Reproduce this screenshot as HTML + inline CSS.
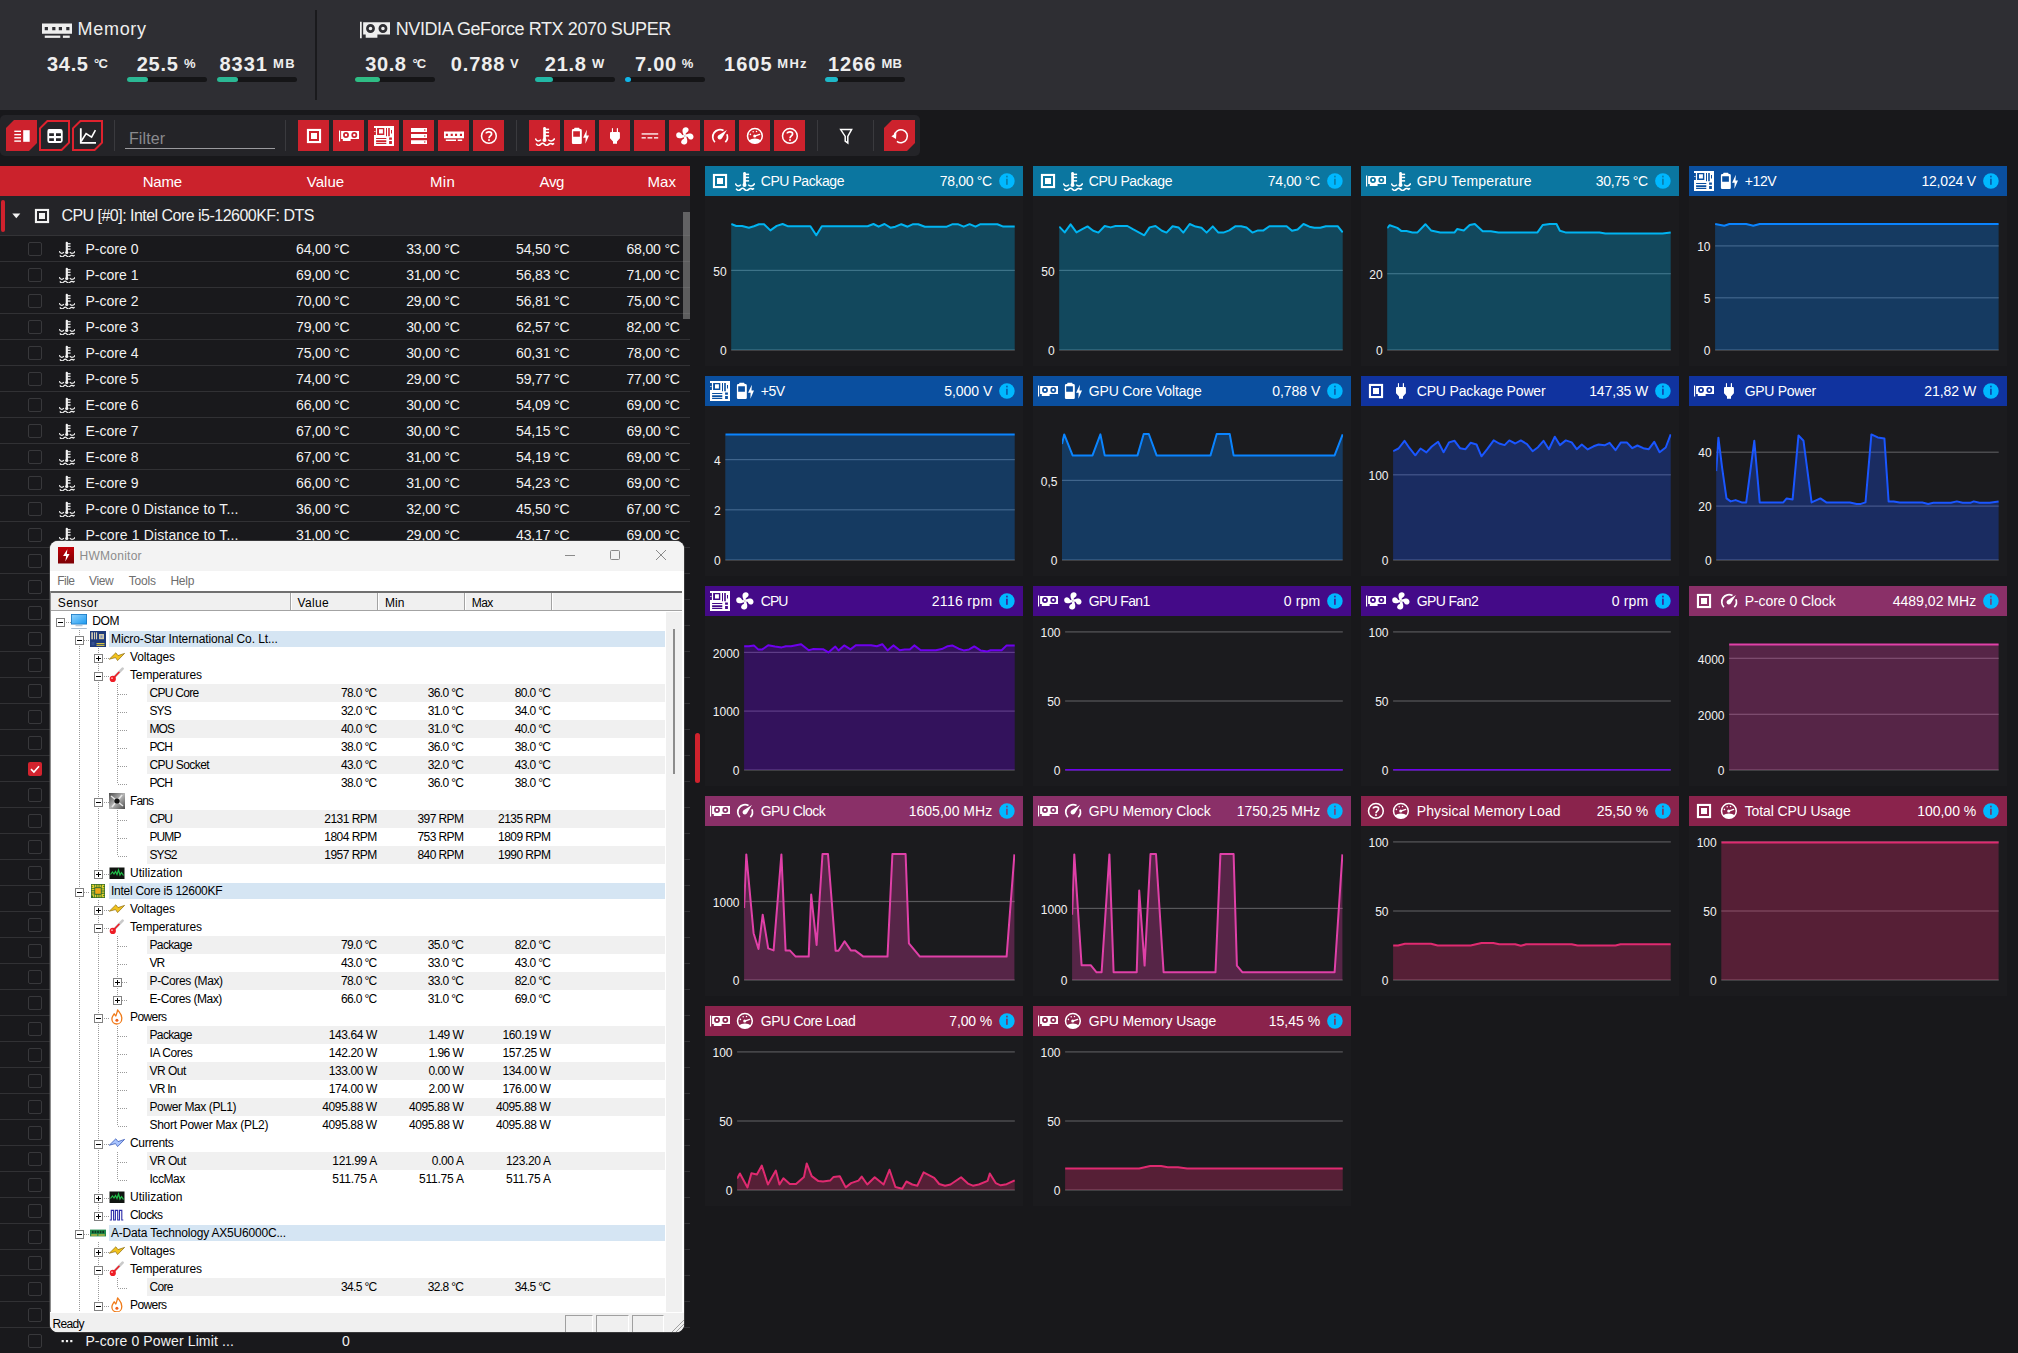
<!DOCTYPE html>
<html><head><meta charset="utf-8"><title>Sensors</title><style>
html,body{margin:0;padding:0}
body{width:2018px;height:1353px;overflow:hidden;position:relative;background:#18181b;font-family:"Liberation Sans", sans-serif;}
.t{position:absolute;white-space:pre;}
.b{position:absolute;display:block;}
</style></head><body>
<svg width="0" height="0" style="position:absolute"><defs><symbol id="i-gpu" viewBox="0 0 20 20"><rect x="-0.1" y="4.5" width="1.25" height="11" fill="currentColor"/><path fill="currentColor" fill-rule="evenodd" d="M2.1,4.9H20V13H11.6V15.1H3.8V13H2.1zM4.05,9.00a2.95,2.95 0 1,0 5.90,0a2.95,2.95 0 1,0 -5.90,0zM5.80,9.00a1.20,1.20 0 1,0 2.40,0a1.20,1.20 0 1,0 -2.40,0zM12.35,9.00a2.95,2.95 0 1,0 5.90,0a2.95,2.95 0 1,0 -5.90,0zM14.10,9.00a1.20,1.20 0 1,0 2.40,0a1.20,1.20 0 1,0 -2.40,0z"/></symbol><symbol id="i-cpu" viewBox="0 0 20 20"><rect x="3.95" y="3.95" width="12.1" height="12.1" fill="none" stroke="currentColor" stroke-width="2.1"/><rect x="7" y="7" width="6" height="6" fill="currentColor"/></symbol><symbol id="i-mobo" viewBox="0 0 20 20"><path fill="currentColor" fill-rule="evenodd" d="M0,0H20V20H0zM3.1,2.1H10.3V8.9H3.1z M5,3.3V7.5H8.9V3.3zM0,2.1H1.9V8.9H0zM12,2.1H13V10.3H12zM14.2,2.1H15.8V10.3H14.2zM17,4H18V7.5H17zM2.1,12H12.3V12.9H2.1z M2.1,14.2H12.3V16.2H2.1z M2.1,17H12.3V17.9H2.1zM15.1,11.6H17.9V13.7H15.1z M15.1,15.1H17.9V17.9H15.1z"/><rect x="0.4" y="5" width="1" height="1" fill="currentColor"/></symbol><symbol id="i-help" viewBox="0 0 20 20"><circle cx="9.9" cy="9.9" r="7.4" fill="none" stroke="currentColor" stroke-width="1.5"/><path d="M7.3,7.6C7.3,5.4 12.6,5.2 12.6,7.9C12.6,9.7 10,10 10,12.2" fill="none" stroke="currentColor" stroke-width="1.7"/><rect x="9.15" y="13.2" width="1.7" height="1.7" fill="currentColor"/></symbol><symbol id="i-thermo" viewBox="0 0 20 20"><g fill="currentColor"><rect x="8.2" y="1" width="2.7" height="12.5" rx="1.2"/><circle cx="9.5" cy="13.9" r="2"/><rect x="10" y="2.6" width="4.1" height="1.5"/><rect x="10" y="5.7" width="4.1" height="1.5"/><rect x="10" y="9.1" width="4.1" height="1.5"/></g><g fill="none" stroke="currentColor" stroke-width="1.5"><path d="M0.4,12.4C1.4,15.6 4.4,15.6 5.9,13.6"/><path d="M13.2,13.6C14.7,15.6 18.2,15.6 19.7,12.4"/><path d="M1.1,17.6C2.6,19.9 4.1,19.9 5.6,18.4C7.1,16.9 8.1,16.9 9.6,18.4C11.1,19.9 12.1,19.9 13.6,18.4C15.1,16.9 16.6,17.4 17.6,18.4L19.1,17.4"/></g></symbol><symbol id="i-volt" viewBox="0 0 20 20"><path fill="currentColor" fill-rule="evenodd" d="M4.2,3.1V2.4Q4.2,1.8 4.8,1.8H8.9Q9.5,1.8 9.5,2.4V3.1H10.4Q11.8,3.1 11.8,4.5V16.8Q11.8,18 10.6,18H3.1Q1.9,18 1.9,16.8V4.5Q1.9,3.1 3.3,3.1zM3.2,5.2H9.9V10.8H3.2z"/><path fill="currentColor" d="M16.8,3.7L13.1,11.7H15.6L15.4,17.8L19,9.5H16.5z"/></symbol><symbol id="i-plug" viewBox="0 0 20 20"><path fill="currentColor" d="M6.9,2.6Q6.9,2 7.45,2Q8,2 8,2.6V6.1H11.8V2.6Q11.8,2 12.4,2Q13,2 13,2.6V6.1H13.9Q14.9,6.1 14.9,7.1V12.3L12,15.5V17.7H8V15.5L5,12.3V7.1Q5,6.1 6,6.1H6.9z"/></symbol><symbol id="i-fan" viewBox="0 0 20 20"><g transform="translate(9.9,9.9)" fill="currentColor"><path transform="rotate(0)" d="M-1.3,-0.9C-1.9,-2.6 -2.9,-4.6 -2.2,-6.6C-1.4,-8.8 1.8,-9.4 3.2,-7.6C4.5,-5.9 3.2,-3.6 1.3,-3C0.6,-2.6 0.6,-1.6 0.9,-0.8z"/><path transform="rotate(90)" d="M-1.3,-0.9C-1.9,-2.6 -2.9,-4.6 -2.2,-6.6C-1.4,-8.8 1.8,-9.4 3.2,-7.6C4.5,-5.9 3.2,-3.6 1.3,-3C0.6,-2.6 0.6,-1.6 0.9,-0.8z"/><path transform="rotate(180)" d="M-1.3,-0.9C-1.9,-2.6 -2.9,-4.6 -2.2,-6.6C-1.4,-8.8 1.8,-9.4 3.2,-7.6C4.5,-5.9 3.2,-3.6 1.3,-3C0.6,-2.6 0.6,-1.6 0.9,-0.8z"/><path transform="rotate(270)" d="M-1.3,-0.9C-1.9,-2.6 -2.9,-4.6 -2.2,-6.6C-1.4,-8.8 1.8,-9.4 3.2,-7.6C4.5,-5.9 3.2,-3.6 1.3,-3C0.6,-2.6 0.6,-1.6 0.9,-0.8z"/><circle r="1.7"/></g><circle cx="9.9" cy="9.9" r="0.75" fill="#000" fill-opacity="0.35"/></symbol><symbol id="i-clock" viewBox="0 0 20 20"><g fill="none" stroke="currentColor" stroke-width="1.7"><path d="M4.90,16.20A7.35,7.35 0 0,1 13.55,4.51"/><path d="M16.91,8.25A7.35,7.35 0 0,1 15.30,16.20"/></g><path fill="currentColor" d="M16.9,4.1L8.6,9.2C6.9,10.4 7.4,13.2 9.7,13.4C11.2,13.5 11.9,12.6 12.4,11.6z"/></symbol><symbol id="i-usage" viewBox="0 0 20 20"><circle cx="9.9" cy="9.9" r="7.4" fill="none" stroke="currentColor" stroke-width="1.5"/><g fill="currentColor"><circle cx="5.4" cy="8.4" r="0.8"/><circle cx="8.2" cy="5.7" r="0.75"/><circle cx="11.5" cy="5.6" r="0.75"/><circle cx="9.7" cy="10.1" r="1.5"/><path d="M3.9,14.6C6.9,11.9 12.9,11.9 15.9,14.6C13.4,18.3 6.4,18.3 3.9,14.6z"/></g><path d="M9.7,10.1L14.7,8.3" stroke="currentColor" stroke-width="1.3" stroke-linecap="round"/></symbol><symbol id="i-current" viewBox="0 0 20 20"><g fill="currentColor"><rect x="1.6" y="7.3" width="16.6" height="1.3"/><rect x="1.6" y="11.2" width="4.2" height="1.3"/><rect x="7.5" y="11.2" width="4.8" height="1.3"/><rect x="14" y="11.2" width="4.2" height="1.3"/></g></symbol><symbol id="i-drive" viewBox="0 0 20 20"><path fill="currentColor" fill-rule="evenodd" d="M2,2H18V6H2z M2,8.1H18V11.9H2z M2,14.2H18V18H2zM15.05,4.00a0.75,0.75 0 1,0 1.50,0a0.75,0.75 0 1,0 -1.50,0zM15.05,10.00a0.75,0.75 0 1,0 1.50,0a0.75,0.75 0 1,0 -1.50,0zM15.05,16.10a0.75,0.75 0 1,0 1.50,0a0.75,0.75 0 1,0 -1.50,0z"/></symbol><symbol id="i-ram" viewBox="0 0 20 20"><path fill="currentColor" fill-rule="evenodd" d="M0,5.5H20V12.3H0zM1.8,7.8H3.9V10H1.8z M6.7,7.8H8.8V10H6.7z M11,7.8H13.1V10H11z M15.9,7.8H18V10H15.9z"/><rect x="1.8" y="13.5" width="10.2" height="1.5" fill="currentColor"/><rect x="13.7" y="13.5" width="4.5" height="1.5" fill="currentColor"/></symbol><symbol id="i-filter" viewBox="0 0 20 20"><path d="M4.7,3.6H15.6L11.8,10.4V16.9L9.2,15V10.4z" fill="none" stroke="currentColor" stroke-width="1.5" stroke-linejoin="miter"/></symbol><symbol id="i-reset" viewBox="0 0 20 20"><path d="M4.44,9.52A6.5,6.5 0 1,1 6.90,15.32" fill="none" stroke="currentColor" stroke-width="1.5"/><path fill="currentColor" d="M1.4,10.2L6.4,6.9L6.0,12.9z"/></symbol><symbol id="i-dots" viewBox="0 0 20 20"><g fill="currentColor"><rect x="3.6" y="9" width="2.2" height="2.2"/><rect x="7.9" y="9" width="2.2" height="2.2"/><rect x="12.2" y="9" width="2.2" height="2.2"/></g></symbol><symbol id="i-info" viewBox="0 0 16 16"><circle cx="8" cy="8" r="8" fill="#00b2ff"/><rect x="7.15" y="6.7" width="1.7" height="5.6" fill="#0a6390"/><rect x="7.15" y="3.8" width="1.7" height="1.8" fill="#0a6390"/></symbol><symbol id="i-v1" viewBox="0 0 31 31"><g fill="currentColor"><rect x="8.3" y="10.6" width="6.7" height="1.4"/><rect x="8.3" y="13.9" width="6.7" height="1.4"/><rect x="8.3" y="17.1" width="6.7" height="1.4"/><rect x="8.3" y="20.4" width="6.7" height="1.4"/><rect x="17.2" y="10.2" width="6.5" height="11.6"/></g></symbol><symbol id="i-v2" viewBox="0 0 31 31"><path fill="currentColor" fill-rule="evenodd" d="M10,9H21.3Q23.7,9 23.7,11.4V20.5Q23.7,22.9 21.3,22.9H10Q8.4,22.9 8.4,20.5V11.4Q8.4,9 10,9zM10.2,13.2H14.9V16H10.2z M17,13.2H21.9V16H17z M10.2,18.2H14.9V21H10.2z M17,18.2H21.9V21H17z"/></symbol><symbol id="i-v3" viewBox="0 0 31 31"><g fill="none" stroke="currentColor" stroke-width="1.8"><path d="M8.8,8.2V22.8H24"/><path d="M9.2,21.3L14.1,13.6L19.6,17.2L23.4,10.2" stroke-width="1.6"/></g></symbol></defs></svg>
<div class="b" style="left:0px;top:0px;width:2018px;height:110px;background:#2e2e33;"></div>
<div class="b" style="left:315px;top:10px;width:2px;height:90px;background:#1a1a1d;"></div>
<svg class="b" style="left:41.5px;top:15px;color:#eeeeee;" width="30.5" height="30.5"><use href="#i-ram"/></svg>
<span id="t1" class="t" style="top:18.0px;font-size:18px;line-height:23px;color:#eeeeee;letter-spacing:0.68px;left:77.6px;">Memory</span>
<span id="t2" class="t" style="top:18.0px;font-size:18px;line-height:23px;color:#eeeeee;letter-spacing:-0.40px;left:395.7px;">NVIDIA GeForce RTX 2070 SUPER</span>
<svg class="b" style="left:360px;top:15.3px;color:#eeeeee;" width="30" height="30"><use href="#i-gpu"/></svg>
<span id="t3" class="t" style="top:50.5px;font-size:20px;line-height:26px;color:#eeeeee;font-weight:700;letter-spacing:0.69px;left:47.0px;">34.5</span>
<span id="t4" class="t" style="top:54.8px;font-size:13px;line-height:17px;color:#eeeeee;font-weight:700;letter-spacing:-0.59px;left:94.0px;">°C</span>
<span id="t5" class="t" style="top:50.5px;font-size:20px;line-height:26px;color:#eeeeee;font-weight:700;letter-spacing:0.79px;left:136.7px;">25.5</span>
<span id="t6" class="t" style="top:54.8px;font-size:13px;line-height:17px;color:#eeeeee;font-weight:700;left:184.0px;">%</span>
<div class="b" style="left:127px;top:77px;width:80px;height:5px;background:#151517;border-radius:3px;"></div>
<div class="b" style="left:127px;top:77px;width:21px;height:5px;background:#2bb894;border-radius:3px;"></div>
<span id="t7" class="t" style="top:50.5px;font-size:20px;line-height:26px;color:#eeeeee;font-weight:700;letter-spacing:1.00px;left:219.5px;">8331</span>
<span id="t8" class="t" style="top:54.8px;font-size:13px;line-height:17px;color:#eeeeee;font-weight:700;letter-spacing:1.38px;left:273.0px;">MB</span>
<div class="b" style="left:217px;top:77px;width:80px;height:5px;background:#151517;border-radius:3px;"></div>
<div class="b" style="left:217px;top:77px;width:21px;height:5px;background:#2bb894;border-radius:3px;"></div>
<span id="t9" class="t" style="top:50.5px;font-size:20px;line-height:26px;color:#eeeeee;font-weight:700;letter-spacing:0.59px;left:365.3px;">30.8</span>
<span id="t10" class="t" style="top:54.8px;font-size:13px;line-height:17px;color:#eeeeee;font-weight:700;letter-spacing:-0.90px;left:412.4px;">°C</span>
<div class="b" style="left:355px;top:77px;width:80px;height:5px;background:#151517;border-radius:3px;"></div>
<div class="b" style="left:355px;top:77px;width:25px;height:5px;background:#2fbd85;border-radius:3px;"></div>
<span id="t11" class="t" style="top:50.5px;font-size:20px;line-height:26px;color:#eeeeee;font-weight:700;letter-spacing:0.88px;left:450.7px;">0.788</span>
<span id="t12" class="t" style="top:54.8px;font-size:13px;line-height:17px;color:#eeeeee;font-weight:700;left:510.0px;">V</span>
<span id="t13" class="t" style="top:50.5px;font-size:20px;line-height:26px;color:#eeeeee;font-weight:700;letter-spacing:0.75px;left:544.8px;">21.8</span>
<span id="t14" class="t" style="top:54.8px;font-size:13px;line-height:17px;color:#eeeeee;font-weight:700;left:592.0px;">W</span>
<div class="b" style="left:535px;top:77px;width:80px;height:5px;background:#151517;border-radius:3px;"></div>
<div class="b" style="left:535px;top:77px;width:18px;height:5px;background:#22b8a6;border-radius:3px;"></div>
<span id="t15" class="t" style="top:50.5px;font-size:20px;line-height:26px;color:#eeeeee;font-weight:700;letter-spacing:0.79px;left:634.9px;">7.00</span>
<span id="t16" class="t" style="top:54.8px;font-size:13px;line-height:17px;color:#eeeeee;font-weight:700;left:681.7px;">%</span>
<div class="b" style="left:625px;top:77px;width:80px;height:5px;background:#151517;border-radius:3px;"></div>
<div class="b" style="left:625px;top:77px;width:6px;height:5px;background:#12b5e8;border-radius:3px;"></div>
<span id="t17" class="t" style="top:50.5px;font-size:20px;line-height:26px;color:#eeeeee;font-weight:700;letter-spacing:1.03px;left:724.0px;">1605</span>
<span id="t18" class="t" style="top:54.8px;font-size:13px;line-height:17px;color:#eeeeee;font-weight:700;letter-spacing:1.29px;left:777.3px;">MHz</span>
<span id="t19" class="t" style="top:50.5px;font-size:20px;line-height:26px;color:#eeeeee;font-weight:700;letter-spacing:0.97px;left:828.0px;">1266</span>
<span id="t20" class="t" style="top:54.8px;font-size:13px;line-height:17px;color:#eeeeee;font-weight:700;letter-spacing:0.18px;left:881.6px;">MB</span>
<div class="b" style="left:825px;top:77px;width:80px;height:5px;background:#151517;border-radius:3px;"></div>
<div class="b" style="left:825px;top:77px;width:13px;height:5px;background:#1fb8c8;border-radius:3px;"></div>
<div class="b" style="left:0px;top:115px;width:920px;height:41px;background:#242428;border-radius:5px;"></div>
<div class="b" style="left:6px;top:120px;width:31px;height:31px;background:#cd222d;clip-path:polygon(8px 0,100% 0,100% calc(100% - 8px),calc(100% - 8px) 100%,0 100%,0 8px);"></div>
<svg class="b" style="left:6px;top:120px;color:#fff;" width="31" height="31"><use href="#i-v1"/></svg>
<svg class="b" style="left:39px;top:120px" width="31" height="31"><path d="M8.4,1H30V22.6L22.6,30H1V8.4z" fill="none" stroke="#df222e" stroke-width="2"/></svg>
<svg class="b" style="left:39px;top:120px;color:#fff;" width="31" height="31"><use href="#i-v2"/></svg>
<svg class="b" style="left:72px;top:120px" width="31" height="31"><path d="M8.4,1H30V22.6L22.6,30H1V8.4z" fill="none" stroke="#df222e" stroke-width="2"/></svg>
<svg class="b" style="left:72px;top:120px;color:#fff;" width="31" height="31"><use href="#i-v3"/></svg>
<div class="b" style="left:114px;top:120px;width:1px;height:31px;background:#3a3a3e;"></div>
<span id="t21" class="t" style="top:128.0px;font-size:16px;line-height:21px;color:#8a8a8e;letter-spacing:0.09px;left:129.0px;">Filter</span>
<div class="b" style="left:125px;top:147.5px;width:150px;height:1px;background:#9a9a9e;"></div>
<div class="b" style="left:285px;top:120px;width:1px;height:31px;background:#3a3a3e;"></div>
<div class="b" style="left:298px;top:120px;width:31px;height:31px;background:#cd222d;"></div>
<svg class="b" style="left:303.5px;top:125.5px;color:#fff;" width="20" height="20"><use href="#i-cpu"/></svg>
<div class="b" style="left:333px;top:120px;width:31px;height:31px;background:#cd222d;"></div>
<svg class="b" style="left:338.5px;top:125.5px;color:#fff;" width="20" height="20"><use href="#i-gpu"/></svg>
<div class="b" style="left:368px;top:120px;width:31px;height:31px;background:#cd222d;"></div>
<svg class="b" style="left:373.5px;top:125.5px;color:#fff;" width="20" height="20"><use href="#i-mobo"/></svg>
<div class="b" style="left:403px;top:120px;width:31px;height:31px;background:#cd222d;"></div>
<svg class="b" style="left:408.5px;top:125.5px;color:#fff;" width="20" height="20"><use href="#i-drive"/></svg>
<div class="b" style="left:438px;top:120px;width:31px;height:31px;background:#cd222d;"></div>
<svg class="b" style="left:443.5px;top:125.5px;color:#fff;" width="20" height="20"><use href="#i-ram"/></svg>
<div class="b" style="left:473px;top:120px;width:31px;height:31px;background:#cd222d;"></div>
<svg class="b" style="left:478.5px;top:125.5px;color:#fff;" width="20" height="20"><use href="#i-help"/></svg>
<div class="b" style="left:516px;top:120px;width:1px;height:31px;background:#3a3a3e;"></div>
<div class="b" style="left:529px;top:120px;width:31px;height:31px;background:#cd222d;"></div>
<svg class="b" style="left:534.5px;top:125.5px;color:#fff;" width="20" height="20"><use href="#i-thermo"/></svg>
<div class="b" style="left:564px;top:120px;width:31px;height:31px;background:#cd222d;"></div>
<svg class="b" style="left:569.5px;top:125.5px;color:#fff;" width="20" height="20"><use href="#i-volt"/></svg>
<div class="b" style="left:599px;top:120px;width:31px;height:31px;background:#cd222d;"></div>
<svg class="b" style="left:604.5px;top:125.5px;color:#fff;" width="20" height="20"><use href="#i-plug"/></svg>
<div class="b" style="left:634px;top:120px;width:31px;height:31px;background:#cd222d;"></div>
<svg class="b" style="left:639.5px;top:125.5px;color:#fff;" width="20" height="20"><use href="#i-current"/></svg>
<div class="b" style="left:669px;top:120px;width:31px;height:31px;background:#cd222d;"></div>
<svg class="b" style="left:674.5px;top:125.5px;color:#fff;" width="20" height="20"><use href="#i-fan"/></svg>
<div class="b" style="left:704px;top:120px;width:31px;height:31px;background:#cd222d;"></div>
<svg class="b" style="left:709.5px;top:125.5px;color:#fff;" width="20" height="20"><use href="#i-clock"/></svg>
<div class="b" style="left:739px;top:120px;width:31px;height:31px;background:#cd222d;"></div>
<svg class="b" style="left:744.5px;top:125.5px;color:#fff;" width="20" height="20"><use href="#i-usage"/></svg>
<div class="b" style="left:774px;top:120px;width:31px;height:31px;background:#cd222d;"></div>
<svg class="b" style="left:779.5px;top:125.5px;color:#fff;" width="20" height="20"><use href="#i-help"/></svg>
<div class="b" style="left:817px;top:120px;width:1px;height:31px;background:#3a3a3e;"></div>
<svg class="b" style="left:836px;top:125.5px;color:#fff;" width="20" height="20"><use href="#i-filter"/></svg>
<div class="b" style="left:873px;top:120px;width:1px;height:31px;background:#3a3a3e;"></div>
<div class="b" style="left:884px;top:120px;width:31px;height:31px;background:#cd222d;clip-path:polygon(8px 0,100% 0,100% calc(100% - 8px),calc(100% - 8px) 100%,0 100%,0 8px);"></div>
<svg class="b" style="left:889.5px;top:125.5px;color:#fff;" width="20" height="20"><use href="#i-reset"/></svg>
<div class="b" style="left:0px;top:166px;width:690px;height:30px;background:#cb222c;"></div>
<span id="t22" class="t" style="top:171.5px;font-size:15px;line-height:20px;color:#fff;letter-spacing:-0.24px;left:-137.7px;width:600px;text-align:center;">Name</span>
<span id="t23" class="t" style="top:171.5px;font-size:15px;line-height:20px;color:#fff;letter-spacing:0.06px;left:25.5px;width:600px;text-align:center;">Value</span>
<span id="t24" class="t" style="top:171.5px;font-size:15px;line-height:20px;color:#fff;letter-spacing:0.31px;left:142.5px;width:600px;text-align:center;">Min</span>
<span id="t25" class="t" style="top:171.5px;font-size:15px;line-height:20px;color:#fff;letter-spacing:-0.39px;left:251.8px;width:600px;text-align:center;">Avg</span>
<span id="t26" class="t" style="top:171.5px;font-size:15px;line-height:20px;color:#fff;letter-spacing:0.08px;left:361.7px;width:600px;text-align:center;">Max</span>
<div class="b" style="left:0px;top:196px;width:690px;height:39px;background:#242428;"></div>
<div class="b" style="left:0px;top:235px;width:690px;height:1px;background:#333336;"></div>
<div class="b" style="left:1px;top:200px;width:4px;height:32px;background:#d0222d;border-radius:2px;"></div>
<svg class="b" style="left:12px;top:213px" width="9" height="6"><path d="M0.3,0.6H8.3L4.3,5.2z" fill="#f2f2f2"/></svg>
<svg class="b" style="left:32px;top:206px;color:#f2f2f2;" width="20" height="20"><use href="#i-cpu"/></svg>
<span id="t27" class="t" style="top:205.0px;font-size:16px;line-height:21px;color:#f2f2f2;letter-spacing:-0.52px;left:61.4px;">CPU [#0]: Intel Core i5-12600KF: DTS</span>
<div class="b" style="left:0px;top:236px;width:690px;height:1117px;background:#19191c;background-image:repeating-linear-gradient(to bottom,transparent 0,transparent 25px,#313134 25px,#313134 26px);"></div>
<div class="b" style="left:28px;top:242px;width:12px;height:12px;background:#19191c;border:1px solid #38383b;border-radius:2px;"></div>
<svg class="b" style="left:58.7px;top:240.5px;color:#f2f2f2;" width="16.4" height="16.4"><use href="#i-thermo"/></svg>
<span id="t28" class="t" style="top:239.8px;font-size:14px;line-height:18px;color:#f2f2f2;letter-spacing:0.04px;left:85.4px;">P-core 0</span>
<span id="t29" class="t" style="top:239.8px;font-size:14px;line-height:18px;color:#f2f2f2;letter-spacing:-0.15px;right:1668.5px;">64,00 °C</span>
<span id="t30" class="t" style="top:239.8px;font-size:14px;line-height:18px;color:#f2f2f2;letter-spacing:-0.15px;right:1558.4px;">33,00 °C</span>
<span id="t31" class="t" style="top:239.8px;font-size:14px;line-height:18px;color:#f2f2f2;letter-spacing:-0.15px;right:1448.5px;">54,50 °C</span>
<span id="t32" class="t" style="top:239.8px;font-size:14px;line-height:18px;color:#f2f2f2;letter-spacing:-0.15px;right:1338.2px;">68,00 °C</span>
<div class="b" style="left:28px;top:268px;width:12px;height:12px;background:#19191c;border:1px solid #38383b;border-radius:2px;"></div>
<svg class="b" style="left:58.7px;top:266.5px;color:#f2f2f2;" width="16.4" height="16.4"><use href="#i-thermo"/></svg>
<span id="t33" class="t" style="top:265.8px;font-size:14px;line-height:18px;color:#f2f2f2;letter-spacing:0.04px;left:85.4px;">P-core 1</span>
<span id="t34" class="t" style="top:265.8px;font-size:14px;line-height:18px;color:#f2f2f2;letter-spacing:-0.15px;right:1668.5px;">69,00 °C</span>
<span id="t35" class="t" style="top:265.8px;font-size:14px;line-height:18px;color:#f2f2f2;letter-spacing:-0.15px;right:1558.4px;">31,00 °C</span>
<span id="t36" class="t" style="top:265.8px;font-size:14px;line-height:18px;color:#f2f2f2;letter-spacing:-0.15px;right:1448.5px;">56,83 °C</span>
<span id="t37" class="t" style="top:265.8px;font-size:14px;line-height:18px;color:#f2f2f2;letter-spacing:-0.15px;right:1338.2px;">71,00 °C</span>
<div class="b" style="left:28px;top:294px;width:12px;height:12px;background:#19191c;border:1px solid #38383b;border-radius:2px;"></div>
<svg class="b" style="left:58.7px;top:292.5px;color:#f2f2f2;" width="16.4" height="16.4"><use href="#i-thermo"/></svg>
<span id="t38" class="t" style="top:291.8px;font-size:14px;line-height:18px;color:#f2f2f2;letter-spacing:0.04px;left:85.4px;">P-core 2</span>
<span id="t39" class="t" style="top:291.8px;font-size:14px;line-height:18px;color:#f2f2f2;letter-spacing:-0.15px;right:1668.5px;">70,00 °C</span>
<span id="t40" class="t" style="top:291.8px;font-size:14px;line-height:18px;color:#f2f2f2;letter-spacing:-0.15px;right:1558.4px;">29,00 °C</span>
<span id="t41" class="t" style="top:291.8px;font-size:14px;line-height:18px;color:#f2f2f2;letter-spacing:-0.15px;right:1448.5px;">56,81 °C</span>
<span id="t42" class="t" style="top:291.8px;font-size:14px;line-height:18px;color:#f2f2f2;letter-spacing:-0.15px;right:1338.2px;">75,00 °C</span>
<div class="b" style="left:28px;top:320px;width:12px;height:12px;background:#19191c;border:1px solid #38383b;border-radius:2px;"></div>
<svg class="b" style="left:58.7px;top:318.5px;color:#f2f2f2;" width="16.4" height="16.4"><use href="#i-thermo"/></svg>
<span id="t43" class="t" style="top:317.8px;font-size:14px;line-height:18px;color:#f2f2f2;letter-spacing:0.04px;left:85.4px;">P-core 3</span>
<span id="t44" class="t" style="top:317.8px;font-size:14px;line-height:18px;color:#f2f2f2;letter-spacing:-0.15px;right:1668.5px;">79,00 °C</span>
<span id="t45" class="t" style="top:317.8px;font-size:14px;line-height:18px;color:#f2f2f2;letter-spacing:-0.15px;right:1558.4px;">30,00 °C</span>
<span id="t46" class="t" style="top:317.8px;font-size:14px;line-height:18px;color:#f2f2f2;letter-spacing:-0.15px;right:1448.5px;">62,57 °C</span>
<span id="t47" class="t" style="top:317.8px;font-size:14px;line-height:18px;color:#f2f2f2;letter-spacing:-0.15px;right:1338.2px;">82,00 °C</span>
<div class="b" style="left:28px;top:346px;width:12px;height:12px;background:#19191c;border:1px solid #38383b;border-radius:2px;"></div>
<svg class="b" style="left:58.7px;top:344.5px;color:#f2f2f2;" width="16.4" height="16.4"><use href="#i-thermo"/></svg>
<span id="t48" class="t" style="top:343.8px;font-size:14px;line-height:18px;color:#f2f2f2;letter-spacing:0.04px;left:85.4px;">P-core 4</span>
<span id="t49" class="t" style="top:343.8px;font-size:14px;line-height:18px;color:#f2f2f2;letter-spacing:-0.15px;right:1668.5px;">75,00 °C</span>
<span id="t50" class="t" style="top:343.8px;font-size:14px;line-height:18px;color:#f2f2f2;letter-spacing:-0.15px;right:1558.4px;">30,00 °C</span>
<span id="t51" class="t" style="top:343.8px;font-size:14px;line-height:18px;color:#f2f2f2;letter-spacing:-0.15px;right:1448.5px;">60,31 °C</span>
<span id="t52" class="t" style="top:343.8px;font-size:14px;line-height:18px;color:#f2f2f2;letter-spacing:-0.15px;right:1338.2px;">78,00 °C</span>
<div class="b" style="left:28px;top:372px;width:12px;height:12px;background:#19191c;border:1px solid #38383b;border-radius:2px;"></div>
<svg class="b" style="left:58.7px;top:370.5px;color:#f2f2f2;" width="16.4" height="16.4"><use href="#i-thermo"/></svg>
<span id="t53" class="t" style="top:369.8px;font-size:14px;line-height:18px;color:#f2f2f2;letter-spacing:0.04px;left:85.4px;">P-core 5</span>
<span id="t54" class="t" style="top:369.8px;font-size:14px;line-height:18px;color:#f2f2f2;letter-spacing:-0.15px;right:1668.5px;">74,00 °C</span>
<span id="t55" class="t" style="top:369.8px;font-size:14px;line-height:18px;color:#f2f2f2;letter-spacing:-0.15px;right:1558.4px;">29,00 °C</span>
<span id="t56" class="t" style="top:369.8px;font-size:14px;line-height:18px;color:#f2f2f2;letter-spacing:-0.15px;right:1448.5px;">59,77 °C</span>
<span id="t57" class="t" style="top:369.8px;font-size:14px;line-height:18px;color:#f2f2f2;letter-spacing:-0.15px;right:1338.2px;">77,00 °C</span>
<div class="b" style="left:28px;top:398px;width:12px;height:12px;background:#19191c;border:1px solid #38383b;border-radius:2px;"></div>
<svg class="b" style="left:58.7px;top:396.5px;color:#f2f2f2;" width="16.4" height="16.4"><use href="#i-thermo"/></svg>
<span id="t58" class="t" style="top:395.8px;font-size:14px;line-height:18px;color:#f2f2f2;letter-spacing:0.04px;left:85.4px;">E-core 6</span>
<span id="t59" class="t" style="top:395.8px;font-size:14px;line-height:18px;color:#f2f2f2;letter-spacing:-0.15px;right:1668.5px;">66,00 °C</span>
<span id="t60" class="t" style="top:395.8px;font-size:14px;line-height:18px;color:#f2f2f2;letter-spacing:-0.15px;right:1558.4px;">30,00 °C</span>
<span id="t61" class="t" style="top:395.8px;font-size:14px;line-height:18px;color:#f2f2f2;letter-spacing:-0.15px;right:1448.5px;">54,09 °C</span>
<span id="t62" class="t" style="top:395.8px;font-size:14px;line-height:18px;color:#f2f2f2;letter-spacing:-0.15px;right:1338.2px;">69,00 °C</span>
<div class="b" style="left:28px;top:424px;width:12px;height:12px;background:#19191c;border:1px solid #38383b;border-radius:2px;"></div>
<svg class="b" style="left:58.7px;top:422.5px;color:#f2f2f2;" width="16.4" height="16.4"><use href="#i-thermo"/></svg>
<span id="t63" class="t" style="top:421.8px;font-size:14px;line-height:18px;color:#f2f2f2;letter-spacing:0.04px;left:85.4px;">E-core 7</span>
<span id="t64" class="t" style="top:421.8px;font-size:14px;line-height:18px;color:#f2f2f2;letter-spacing:-0.15px;right:1668.5px;">67,00 °C</span>
<span id="t65" class="t" style="top:421.8px;font-size:14px;line-height:18px;color:#f2f2f2;letter-spacing:-0.15px;right:1558.4px;">30,00 °C</span>
<span id="t66" class="t" style="top:421.8px;font-size:14px;line-height:18px;color:#f2f2f2;letter-spacing:-0.15px;right:1448.5px;">54,15 °C</span>
<span id="t67" class="t" style="top:421.8px;font-size:14px;line-height:18px;color:#f2f2f2;letter-spacing:-0.15px;right:1338.2px;">69,00 °C</span>
<div class="b" style="left:28px;top:450px;width:12px;height:12px;background:#19191c;border:1px solid #38383b;border-radius:2px;"></div>
<svg class="b" style="left:58.7px;top:448.5px;color:#f2f2f2;" width="16.4" height="16.4"><use href="#i-thermo"/></svg>
<span id="t68" class="t" style="top:447.8px;font-size:14px;line-height:18px;color:#f2f2f2;letter-spacing:0.04px;left:85.4px;">E-core 8</span>
<span id="t69" class="t" style="top:447.8px;font-size:14px;line-height:18px;color:#f2f2f2;letter-spacing:-0.15px;right:1668.5px;">67,00 °C</span>
<span id="t70" class="t" style="top:447.8px;font-size:14px;line-height:18px;color:#f2f2f2;letter-spacing:-0.15px;right:1558.4px;">31,00 °C</span>
<span id="t71" class="t" style="top:447.8px;font-size:14px;line-height:18px;color:#f2f2f2;letter-spacing:-0.15px;right:1448.5px;">54,19 °C</span>
<span id="t72" class="t" style="top:447.8px;font-size:14px;line-height:18px;color:#f2f2f2;letter-spacing:-0.15px;right:1338.2px;">69,00 °C</span>
<div class="b" style="left:28px;top:476px;width:12px;height:12px;background:#19191c;border:1px solid #38383b;border-radius:2px;"></div>
<svg class="b" style="left:58.7px;top:474.5px;color:#f2f2f2;" width="16.4" height="16.4"><use href="#i-thermo"/></svg>
<span id="t73" class="t" style="top:473.8px;font-size:14px;line-height:18px;color:#f2f2f2;letter-spacing:0.04px;left:85.4px;">E-core 9</span>
<span id="t74" class="t" style="top:473.8px;font-size:14px;line-height:18px;color:#f2f2f2;letter-spacing:-0.15px;right:1668.5px;">66,00 °C</span>
<span id="t75" class="t" style="top:473.8px;font-size:14px;line-height:18px;color:#f2f2f2;letter-spacing:-0.15px;right:1558.4px;">31,00 °C</span>
<span id="t76" class="t" style="top:473.8px;font-size:14px;line-height:18px;color:#f2f2f2;letter-spacing:-0.15px;right:1448.5px;">54,23 °C</span>
<span id="t77" class="t" style="top:473.8px;font-size:14px;line-height:18px;color:#f2f2f2;letter-spacing:-0.15px;right:1338.2px;">69,00 °C</span>
<div class="b" style="left:28px;top:502px;width:12px;height:12px;background:#19191c;border:1px solid #38383b;border-radius:2px;"></div>
<svg class="b" style="left:58.7px;top:500.5px;color:#f2f2f2;" width="16.4" height="16.4"><use href="#i-thermo"/></svg>
<span id="t78" class="t" style="top:499.8px;font-size:14px;line-height:18px;color:#f2f2f2;letter-spacing:0.16px;left:85.4px;">P-core 0 Distance to T...</span>
<span id="t79" class="t" style="top:499.8px;font-size:14px;line-height:18px;color:#f2f2f2;letter-spacing:-0.15px;right:1668.5px;">36,00 °C</span>
<span id="t80" class="t" style="top:499.8px;font-size:14px;line-height:18px;color:#f2f2f2;letter-spacing:-0.15px;right:1558.4px;">32,00 °C</span>
<span id="t81" class="t" style="top:499.8px;font-size:14px;line-height:18px;color:#f2f2f2;letter-spacing:-0.15px;right:1448.5px;">45,50 °C</span>
<span id="t82" class="t" style="top:499.8px;font-size:14px;line-height:18px;color:#f2f2f2;letter-spacing:-0.15px;right:1338.2px;">67,00 °C</span>
<div class="b" style="left:28px;top:528px;width:12px;height:12px;background:#19191c;border:1px solid #38383b;border-radius:2px;"></div>
<svg class="b" style="left:58.7px;top:526.5px;color:#f2f2f2;" width="16.4" height="16.4"><use href="#i-thermo"/></svg>
<span id="t83" class="t" style="top:525.8px;font-size:14px;line-height:18px;color:#f2f2f2;letter-spacing:0.16px;left:85.4px;">P-core 1 Distance to T...</span>
<span id="t84" class="t" style="top:525.8px;font-size:14px;line-height:18px;color:#f2f2f2;letter-spacing:-0.15px;right:1668.5px;">31,00 °C</span>
<span id="t85" class="t" style="top:525.8px;font-size:14px;line-height:18px;color:#f2f2f2;letter-spacing:-0.15px;right:1558.4px;">29,00 °C</span>
<span id="t86" class="t" style="top:525.8px;font-size:14px;line-height:18px;color:#f2f2f2;letter-spacing:-0.15px;right:1448.5px;">43,17 °C</span>
<span id="t87" class="t" style="top:525.8px;font-size:14px;line-height:18px;color:#f2f2f2;letter-spacing:-0.15px;right:1338.2px;">69,00 °C</span>
<div class="b" style="left:28px;top:554px;width:12px;height:12px;background:#19191c;border:1px solid #38383b;border-radius:2px;"></div>
<div class="b" style="left:28px;top:580px;width:12px;height:12px;background:#19191c;border:1px solid #38383b;border-radius:2px;"></div>
<div class="b" style="left:28px;top:606px;width:12px;height:12px;background:#19191c;border:1px solid #38383b;border-radius:2px;"></div>
<div class="b" style="left:28px;top:632px;width:12px;height:12px;background:#19191c;border:1px solid #38383b;border-radius:2px;"></div>
<div class="b" style="left:28px;top:658px;width:12px;height:12px;background:#19191c;border:1px solid #38383b;border-radius:2px;"></div>
<div class="b" style="left:28px;top:684px;width:12px;height:12px;background:#19191c;border:1px solid #38383b;border-radius:2px;"></div>
<div class="b" style="left:28px;top:710px;width:12px;height:12px;background:#19191c;border:1px solid #38383b;border-radius:2px;"></div>
<div class="b" style="left:28px;top:736px;width:12px;height:12px;background:#19191c;border:1px solid #38383b;border-radius:2px;"></div>
<div class="b" style="left:28px;top:762px;width:14px;height:14px;background:#d3232e;border-radius:2px;"></div>
<svg class="b" style="left:28px;top:762px" width="14" height="14"><path d="M3,7.2L5.9,10L11,4.3" fill="none" stroke="#fff" stroke-width="1.6"/></svg>
<div class="b" style="left:28px;top:788px;width:12px;height:12px;background:#19191c;border:1px solid #38383b;border-radius:2px;"></div>
<div class="b" style="left:28px;top:814px;width:12px;height:12px;background:#19191c;border:1px solid #38383b;border-radius:2px;"></div>
<div class="b" style="left:28px;top:840px;width:12px;height:12px;background:#19191c;border:1px solid #38383b;border-radius:2px;"></div>
<div class="b" style="left:28px;top:866px;width:12px;height:12px;background:#19191c;border:1px solid #38383b;border-radius:2px;"></div>
<div class="b" style="left:28px;top:892px;width:12px;height:12px;background:#19191c;border:1px solid #38383b;border-radius:2px;"></div>
<div class="b" style="left:28px;top:918px;width:12px;height:12px;background:#19191c;border:1px solid #38383b;border-radius:2px;"></div>
<div class="b" style="left:28px;top:944px;width:12px;height:12px;background:#19191c;border:1px solid #38383b;border-radius:2px;"></div>
<div class="b" style="left:28px;top:970px;width:12px;height:12px;background:#19191c;border:1px solid #38383b;border-radius:2px;"></div>
<div class="b" style="left:28px;top:996px;width:12px;height:12px;background:#19191c;border:1px solid #38383b;border-radius:2px;"></div>
<div class="b" style="left:28px;top:1022px;width:12px;height:12px;background:#19191c;border:1px solid #38383b;border-radius:2px;"></div>
<div class="b" style="left:28px;top:1048px;width:12px;height:12px;background:#19191c;border:1px solid #38383b;border-radius:2px;"></div>
<div class="b" style="left:28px;top:1074px;width:12px;height:12px;background:#19191c;border:1px solid #38383b;border-radius:2px;"></div>
<div class="b" style="left:28px;top:1100px;width:12px;height:12px;background:#19191c;border:1px solid #38383b;border-radius:2px;"></div>
<div class="b" style="left:28px;top:1126px;width:12px;height:12px;background:#19191c;border:1px solid #38383b;border-radius:2px;"></div>
<div class="b" style="left:28px;top:1152px;width:12px;height:12px;background:#19191c;border:1px solid #38383b;border-radius:2px;"></div>
<div class="b" style="left:28px;top:1178px;width:12px;height:12px;background:#19191c;border:1px solid #38383b;border-radius:2px;"></div>
<div class="b" style="left:28px;top:1204px;width:12px;height:12px;background:#19191c;border:1px solid #38383b;border-radius:2px;"></div>
<div class="b" style="left:28px;top:1230px;width:12px;height:12px;background:#19191c;border:1px solid #38383b;border-radius:2px;"></div>
<div class="b" style="left:28px;top:1256px;width:12px;height:12px;background:#19191c;border:1px solid #38383b;border-radius:2px;"></div>
<div class="b" style="left:28px;top:1282px;width:12px;height:12px;background:#19191c;border:1px solid #38383b;border-radius:2px;"></div>
<div class="b" style="left:28px;top:1308px;width:12px;height:12px;background:#19191c;border:1px solid #38383b;border-radius:2px;"></div>
<div class="b" style="left:28px;top:1334px;width:12px;height:12px;background:#19191c;border:1px solid #38383b;border-radius:2px;"></div>
<svg class="b" style="left:57.5px;top:1330.5px;color:#f2f2f2;" width="20" height="20"><use href="#i-dots"/></svg>
<span id="t88" class="t" style="top:1331.8px;font-size:14px;line-height:18px;color:#f2f2f2;letter-spacing:0.13px;left:85.4px;">P-core 0 Power Limit ...</span>
<span id="t89" class="t" style="top:1331.8px;font-size:14px;line-height:18px;color:#f2f2f2;right:1668.3px;">0</span>
<div class="b" style="left:683px;top:212px;width:7px;height:107px;background:rgba(150,150,150,0.55);"></div>
<div class="b" style="left:695px;top:733px;width:5px;height:50px;background:#d0222d;border-radius:3px;"></div>
<div class="b" style="left:705px;top:166px;width:318px;height:200px;background:#1b1b1e;"></div>
<div class="b" style="left:705px;top:166px;width:318px;height:30px;background:#0b76a0;"></div>
<svg class="b" style="left:710px;top:171px;color:#fff;" width="20" height="20"><use href="#i-cpu"/></svg>
<svg class="b" style="left:735px;top:171px;color:#fff;" width="20" height="20"><use href="#i-thermo"/></svg>
<span id="t90" class="t" style="top:172.3px;font-size:14px;line-height:18px;color:#fff;letter-spacing:-0.42px;left:760.7px;">CPU Package</span>
<span id="t91" class="t" style="top:172.3px;font-size:14px;line-height:18px;color:#fff;letter-spacing:-0.32px;right:1026.1px;">78,00 °C</span>
<svg class="b" style="left:999.4px;top:172.5px" width="16" height="16" viewBox="0 0 16 16"><circle cx="7.9" cy="8" r="7.8" fill="#00b8ff"/><rect x="7.2" y="5.7" width="1.45" height="6.1" fill="#0b76a0"/><rect x="7.2" y="2.7" width="1.45" height="1.7" fill="#0b76a0"/></svg>
<svg class="b" style="left:705px;top:166px" width="318" height="200"><rect x="26.2" y="103.8" width="283.6" height="1.2" fill="#58585b"/><rect x="26.2" y="183.4" width="283.6" height="1.2" fill="#58585b"/><path d="M26.2,58.0 L31.2,60.0 L37.1,60.0 L43.9,61.7 L48.9,60.2 L54.0,58.2 L59.0,58.2 L65.4,64.4 L71.7,59.9 L77.6,58.0 L82.6,60.2 L105.4,60.2 L111.3,69.3 L116.8,60.2 L162.6,60.2 L168.5,58.0 L173.6,60.7 L179.5,58.0 L185.4,61.7 L190.4,60.7 L196.3,58.2 L202.6,60.7 L208.1,58.2 L213.2,58.2 L219.9,60.7 L241.8,60.7 L247.7,58.2 L252.8,58.2 L258.7,60.7 L264.6,58.2 L270.5,60.7 L275.5,58.2 L292.4,58.2 L298.3,60.6 L309.7,60.6 L309.7,184.0 L26.2,184.0Z" fill="#00b4f2" fill-opacity="0.3"/><clipPath id="cp00"><rect x="26.2" y="0" width="284.0" height="184.5"/></clipPath><path d="M26.2,58.0 L31.2,60.0 L37.1,60.0 L43.9,61.7 L48.9,60.2 L54.0,58.2 L59.0,58.2 L65.4,64.4 L71.7,59.9 L77.6,58.0 L82.6,60.2 L105.4,60.2 L111.3,69.3 L116.8,60.2 L162.6,60.2 L168.5,58.0 L173.6,60.7 L179.5,58.0 L185.4,61.7 L190.4,60.7 L196.3,58.2 L202.6,60.7 L208.1,58.2 L213.2,58.2 L219.9,60.7 L241.8,60.7 L247.7,58.2 L252.8,58.2 L258.7,60.7 L264.6,58.2 L270.5,60.7 L275.5,58.2 L292.4,58.2 L298.3,60.6 L309.7,60.6" fill="none" stroke="#00b4f2" stroke-width="2" stroke-linejoin="round" clip-path="url(#cp00)"/></svg>
<span id="t92" class="t" style="top:263.6px;font-size:12px;line-height:16px;color:#f2f2f2;right:1291.4px;">50</span>
<span id="t93" class="t" style="top:343.2px;font-size:12px;line-height:16px;color:#f2f2f2;right:1291.4px;">0</span>
<div class="b" style="left:1033px;top:166px;width:318px;height:200px;background:#1b1b1e;"></div>
<div class="b" style="left:1033px;top:166px;width:318px;height:30px;background:#0b76a0;"></div>
<svg class="b" style="left:1038px;top:171px;color:#fff;" width="20" height="20"><use href="#i-cpu"/></svg>
<svg class="b" style="left:1063px;top:171px;color:#fff;" width="20" height="20"><use href="#i-thermo"/></svg>
<span id="t94" class="t" style="top:172.3px;font-size:14px;line-height:18px;color:#fff;letter-spacing:-0.42px;left:1088.7px;">CPU Package</span>
<span id="t95" class="t" style="top:172.3px;font-size:14px;line-height:18px;color:#fff;letter-spacing:-0.32px;right:698.1px;">74,00 °C</span>
<svg class="b" style="left:1327.4px;top:172.5px" width="16" height="16" viewBox="0 0 16 16"><circle cx="7.9" cy="8" r="7.8" fill="#00b8ff"/><rect x="7.2" y="5.7" width="1.45" height="6.1" fill="#0b76a0"/><rect x="7.2" y="2.7" width="1.45" height="1.7" fill="#0b76a0"/></svg>
<svg class="b" style="left:1033px;top:166px" width="318" height="200"><rect x="26.2" y="103.8" width="283.6" height="1.2" fill="#58585b"/><rect x="26.2" y="183.4" width="283.6" height="1.2" fill="#58585b"/><path d="M26.2,60.6 L31.7,66.4 L37.6,58.4 L43.5,66.4 L49.3,63.1 L54.5,60.4 L60.2,64.8 L65.4,66.6 L71.7,60.0 L77.6,61.4 L82.6,60.0 L94.4,60.0 L100.3,63.4 L111.3,69.3 L116.6,61.4 L122.5,60.0 L128.9,64.8 L133.5,66.6 L139.6,60.2 L145.5,61.4 L150.3,66.6 L156.7,58.0 L162.6,60.6 L168.5,61.7 L173.6,66.6 L179.8,60.4 L185.4,66.6 L190.4,66.6 L196.3,64.4 L202.6,60.2 L208.1,60.2 L213.5,61.4 L219.4,66.6 L225.0,64.4 L230.5,64.4 L236.4,60.2 L253.6,60.2 L259.0,64.8 L264.6,63.6 L270.5,58.0 L276.4,60.7 L281.4,61.7 L287.3,61.7 L292.9,60.2 L304.7,60.2 L309.7,66.4 L309.7,184.0 L26.2,184.0Z" fill="#00b4f2" fill-opacity="0.3"/><clipPath id="cp10"><rect x="26.2" y="0" width="284.0" height="184.5"/></clipPath><path d="M26.2,60.6 L31.7,66.4 L37.6,58.4 L43.5,66.4 L49.3,63.1 L54.5,60.4 L60.2,64.8 L65.4,66.6 L71.7,60.0 L77.6,61.4 L82.6,60.0 L94.4,60.0 L100.3,63.4 L111.3,69.3 L116.6,61.4 L122.5,60.0 L128.9,64.8 L133.5,66.6 L139.6,60.2 L145.5,61.4 L150.3,66.6 L156.7,58.0 L162.6,60.6 L168.5,61.7 L173.6,66.6 L179.8,60.4 L185.4,66.6 L190.4,66.6 L196.3,64.4 L202.6,60.2 L208.1,60.2 L213.5,61.4 L219.4,66.6 L225.0,64.4 L230.5,64.4 L236.4,60.2 L253.6,60.2 L259.0,64.8 L264.6,63.6 L270.5,58.0 L276.4,60.7 L281.4,61.7 L287.3,61.7 L292.9,60.2 L304.7,60.2 L309.7,66.4" fill="none" stroke="#00b4f2" stroke-width="2" stroke-linejoin="round" clip-path="url(#cp10)"/></svg>
<span id="t96" class="t" style="top:263.6px;font-size:12px;line-height:16px;color:#f2f2f2;right:963.4px;">50</span>
<span id="t97" class="t" style="top:343.2px;font-size:12px;line-height:16px;color:#f2f2f2;right:963.4px;">0</span>
<div class="b" style="left:1361px;top:166px;width:318px;height:200px;background:#1b1b1e;"></div>
<div class="b" style="left:1361px;top:166px;width:318px;height:30px;background:#0b76a0;"></div>
<svg class="b" style="left:1366px;top:171px;color:#fff;" width="20" height="20"><use href="#i-gpu"/></svg>
<svg class="b" style="left:1391px;top:171px;color:#fff;" width="20" height="20"><use href="#i-thermo"/></svg>
<span id="t98" class="t" style="top:172.3px;font-size:14px;line-height:18px;color:#fff;letter-spacing:0.17px;left:1416.7px;">GPU Temperature</span>
<span id="t99" class="t" style="top:172.3px;font-size:14px;line-height:18px;color:#fff;letter-spacing:-0.32px;right:370.1px;">30,75 °C</span>
<svg class="b" style="left:1655.4px;top:172.5px" width="16" height="16" viewBox="0 0 16 16"><circle cx="7.9" cy="8" r="7.8" fill="#00b8ff"/><rect x="7.2" y="5.7" width="1.45" height="6.1" fill="#0b76a0"/><rect x="7.2" y="2.7" width="1.45" height="1.7" fill="#0b76a0"/></svg>
<svg class="b" style="left:1361px;top:166px" width="318" height="200"><rect x="26.2" y="107.1" width="283.6" height="1.2" fill="#58585b"/><rect x="26.2" y="183.4" width="283.6" height="1.2" fill="#58585b"/><path d="M26.2,62.2 L28.7,59.2 L36.3,61.9 L40.5,65.1 L45.5,65.1 L51.4,66.4 L56.5,66.4 L64.4,58.2 L70.0,64.4 L79.2,66.4 L93.6,66.4 L96.1,63.1 L102.8,64.4 L108.7,59.0 L113.8,58.0 L121.7,65.3 L129.8,65.3 L137.4,66.4 L176.5,66.4 L181.7,59.0 L188.8,58.0 L195.5,58.0 L198.9,64.8 L204.4,66.4 L238.5,66.4 L244.4,67.5 L301.6,67.5 L309.7,66.4 L309.7,184.0 L26.2,184.0Z" fill="#00b4f2" fill-opacity="0.3"/><clipPath id="cp20"><rect x="26.2" y="0" width="284.0" height="184.5"/></clipPath><path d="M26.2,62.2 L28.7,59.2 L36.3,61.9 L40.5,65.1 L45.5,65.1 L51.4,66.4 L56.5,66.4 L64.4,58.2 L70.0,64.4 L79.2,66.4 L93.6,66.4 L96.1,63.1 L102.8,64.4 L108.7,59.0 L113.8,58.0 L121.7,65.3 L129.8,65.3 L137.4,66.4 L176.5,66.4 L181.7,59.0 L188.8,58.0 L195.5,58.0 L198.9,64.8 L204.4,66.4 L238.5,66.4 L244.4,67.5 L301.6,67.5 L309.7,66.4" fill="none" stroke="#00b4f2" stroke-width="2" stroke-linejoin="round" clip-path="url(#cp20)"/></svg>
<span id="t100" class="t" style="top:266.9px;font-size:12px;line-height:16px;color:#f2f2f2;right:635.4px;">20</span>
<span id="t101" class="t" style="top:343.2px;font-size:12px;line-height:16px;color:#f2f2f2;right:635.4px;">0</span>
<div class="b" style="left:1689px;top:166px;width:318px;height:200px;background:#1b1b1e;"></div>
<div class="b" style="left:1689px;top:166px;width:318px;height:30px;background:#0a4f9f;"></div>
<svg class="b" style="left:1694px;top:171px;color:#fff;" width="20" height="20"><use href="#i-mobo"/></svg>
<svg class="b" style="left:1719px;top:171px;color:#fff;" width="20" height="20"><use href="#i-volt"/></svg>
<span id="t102" class="t" style="top:172.3px;font-size:14px;line-height:18px;color:#fff;letter-spacing:-0.36px;left:1744.7px;">+12V</span>
<span id="t103" class="t" style="top:172.3px;font-size:14px;line-height:18px;color:#fff;letter-spacing:-0.18px;right:42.0px;">12,024 V</span>
<svg class="b" style="left:1983.4px;top:172.5px" width="16" height="16" viewBox="0 0 16 16"><circle cx="7.9" cy="8" r="7.8" fill="#00b8ff"/><rect x="7.2" y="5.7" width="1.45" height="6.1" fill="#0a4f9f"/><rect x="7.2" y="2.7" width="1.45" height="1.7" fill="#0a4f9f"/></svg>
<svg class="b" style="left:1689px;top:166px" width="318" height="200"><rect x="26.1" y="79.3" width="283.6" height="1.2" fill="#58585b"/><rect x="26.1" y="131.2" width="283.6" height="1.2" fill="#58585b"/><rect x="26.1" y="183.4" width="283.6" height="1.2" fill="#58585b"/><path d="M26.1,58.0 L35.3,59.7 L40.4,58.0 L57.2,58.0 L64.3,59.7 L70.7,58.0 L309.6,58.0 L309.6,184.0 L26.1,184.0Z" fill="#0a84ff" fill-opacity="0.3"/><clipPath id="cp30"><rect x="26.1" y="0" width="284.0" height="184.5"/></clipPath><path d="M26.1,58.0 L35.3,59.7 L40.4,58.0 L57.2,58.0 L64.3,59.7 L70.7,58.0 L309.6,58.0" fill="none" stroke="#0a84ff" stroke-width="2" stroke-linejoin="round" clip-path="url(#cp30)"/></svg>
<span id="t104" class="t" style="top:239.1px;font-size:12px;line-height:16px;color:#f2f2f2;right:307.5px;">10</span>
<span id="t105" class="t" style="top:291.0px;font-size:12px;line-height:16px;color:#f2f2f2;right:307.5px;">5</span>
<span id="t106" class="t" style="top:343.2px;font-size:12px;line-height:16px;color:#f2f2f2;right:307.5px;">0</span>
<div class="b" style="left:705px;top:376px;width:318px;height:200px;background:#1b1b1e;"></div>
<div class="b" style="left:705px;top:376px;width:318px;height:30px;background:#0a4f9f;"></div>
<svg class="b" style="left:710px;top:381px;color:#fff;" width="20" height="20"><use href="#i-mobo"/></svg>
<svg class="b" style="left:735px;top:381px;color:#fff;" width="20" height="20"><use href="#i-volt"/></svg>
<span id="t107" class="t" style="top:382.3px;font-size:14px;line-height:18px;color:#fff;letter-spacing:-0.41px;left:760.7px;">+5V</span>
<span id="t108" class="t" style="top:382.3px;font-size:14px;line-height:18px;color:#fff;letter-spacing:-0.04px;right:1025.8px;">5,000 V</span>
<svg class="b" style="left:999.4px;top:382.5px" width="16" height="16" viewBox="0 0 16 16"><circle cx="7.9" cy="8" r="7.8" fill="#00b8ff"/><rect x="7.2" y="5.7" width="1.45" height="6.1" fill="#0a4f9f"/><rect x="7.2" y="2.7" width="1.45" height="1.7" fill="#0a4f9f"/></svg>
<svg class="b" style="left:705px;top:376px" width="318" height="200"><rect x="20.3" y="83.0" width="289.5" height="1.2" fill="#58585b"/><rect x="20.3" y="133.2" width="289.5" height="1.2" fill="#58585b"/><rect x="20.3" y="183.4" width="289.5" height="1.2" fill="#58585b"/><path d="M20.3,58.4 L309.7,58.4 L309.7,184.0 L20.3,184.0Z" fill="#0a84ff" fill-opacity="0.3"/><clipPath id="cp01"><rect x="20.3" y="0" width="289.9" height="184.5"/></clipPath><path d="M20.3,58.4 L309.7,58.4" fill="none" stroke="#0a84ff" stroke-width="2" stroke-linejoin="round" clip-path="url(#cp01)"/></svg>
<span id="t109" class="t" style="top:452.8px;font-size:12px;line-height:16px;color:#f2f2f2;right:1297.3px;">4</span>
<span id="t110" class="t" style="top:503.0px;font-size:12px;line-height:16px;color:#f2f2f2;right:1297.3px;">2</span>
<span id="t111" class="t" style="top:553.2px;font-size:12px;line-height:16px;color:#f2f2f2;right:1297.3px;">0</span>
<div class="b" style="left:1033px;top:376px;width:318px;height:200px;background:#1b1b1e;"></div>
<div class="b" style="left:1033px;top:376px;width:318px;height:30px;background:#0a4f9f;"></div>
<svg class="b" style="left:1038px;top:381px;color:#fff;" width="20" height="20"><use href="#i-gpu"/></svg>
<svg class="b" style="left:1063px;top:381px;color:#fff;" width="20" height="20"><use href="#i-volt"/></svg>
<span id="t112" class="t" style="top:382.3px;font-size:14px;line-height:18px;color:#fff;letter-spacing:-0.14px;left:1088.7px;">GPU Core Voltage</span>
<span id="t113" class="t" style="top:382.3px;font-size:14px;line-height:18px;color:#fff;letter-spacing:-0.04px;right:697.8px;">0,788 V</span>
<svg class="b" style="left:1327.4px;top:382.5px" width="16" height="16" viewBox="0 0 16 16"><circle cx="7.9" cy="8" r="7.8" fill="#00b8ff"/><rect x="7.2" y="5.7" width="1.45" height="6.1" fill="#0a4f9f"/><rect x="7.2" y="2.7" width="1.45" height="1.7" fill="#0a4f9f"/></svg>
<svg class="b" style="left:1033px;top:376px" width="318" height="200"><rect x="29.0" y="103.8" width="280.7" height="1.2" fill="#58585b"/><rect x="29.0" y="183.4" width="280.7" height="1.2" fill="#58585b"/><path d="M29.0,68.1 L31.2,58.4 L39.6,79.4 L59.5,79.4 L67.4,58.4 L71.7,79.4 L104.5,79.4 L110.7,58.0 L115.8,58.0 L123.6,79.4 L177.5,79.4 L183.7,58.0 L196.7,58.0 L200.6,79.4 L301.6,79.4 L309.7,58.4 L309.7,184.0 L29.0,184.0Z" fill="#0a84ff" fill-opacity="0.3"/><clipPath id="cp11"><rect x="29.0" y="0" width="281.1" height="184.5"/></clipPath><path d="M29.0,68.1 L31.2,58.4 L39.6,79.4 L59.5,79.4 L67.4,58.4 L71.7,79.4 L104.5,79.4 L110.7,58.0 L115.8,58.0 L123.6,79.4 L177.5,79.4 L183.7,58.0 L196.7,58.0 L200.6,79.4 L301.6,79.4 L309.7,58.4" fill="none" stroke="#0a84ff" stroke-width="2" stroke-linejoin="round" clip-path="url(#cp11)"/></svg>
<span id="t114" class="t" style="top:473.6px;font-size:12px;line-height:16px;color:#f2f2f2;right:960.6px;">0,5</span>
<span id="t115" class="t" style="top:553.2px;font-size:12px;line-height:16px;color:#f2f2f2;right:960.6px;">0</span>
<div class="b" style="left:1361px;top:376px;width:318px;height:200px;background:#1b1b1e;"></div>
<div class="b" style="left:1361px;top:376px;width:318px;height:30px;background:#10339f;"></div>
<svg class="b" style="left:1366px;top:381px;color:#fff;" width="20" height="20"><use href="#i-cpu"/></svg>
<svg class="b" style="left:1391px;top:381px;color:#fff;" width="20" height="20"><use href="#i-plug"/></svg>
<span id="t116" class="t" style="top:382.3px;font-size:14px;line-height:18px;color:#fff;letter-spacing:-0.16px;left:1416.7px;">CPU Package Power</span>
<span id="t117" class="t" style="top:382.3px;font-size:14px;line-height:18px;color:#fff;letter-spacing:-0.13px;right:369.9px;">147,35 W</span>
<svg class="b" style="left:1655.4px;top:382.5px" width="16" height="16" viewBox="0 0 16 16"><circle cx="7.9" cy="8" r="7.8" fill="#00b8ff"/><rect x="7.2" y="5.7" width="1.45" height="6.1" fill="#10339f"/><rect x="7.2" y="2.7" width="1.45" height="1.7" fill="#10339f"/></svg>
<svg class="b" style="left:1361px;top:376px" width="318" height="200"><rect x="32.1" y="98.2" width="277.7" height="1.2" fill="#58585b"/><rect x="32.1" y="183.4" width="277.7" height="1.2" fill="#58585b"/><path d="M32.1,75.2 L37.5,72.5 L43.5,64.8 L48.6,72.2 L54.3,79.3 L59.5,72.5 L65.4,76.4 L70.8,70.5 L77.1,65.8 L82.6,76.2 L88.0,66.4 L93.6,64.8 L99.0,72.2 L104.5,73.2 L109.6,66.8 L115.5,68.5 L120.5,80.3 L126.4,72.9 L132.7,64.4 L138.2,67.5 L143.6,69.1 L148.3,64.4 L154.2,67.5 L159.8,64.4 L166.0,68.1 L171.6,75.2 L177.0,71.2 L182.5,64.8 L187.9,73.2 L193.8,60.7 L198.9,69.1 L204.8,64.4 L210.7,66.4 L215.7,73.2 L220.8,68.5 L226.7,73.4 L232.6,70.3 L237.6,68.5 L243.5,69.3 L248.6,66.8 L254.5,74.2 L259.9,66.4 L265.8,66.4 L271.3,72.2 L276.4,69.5 L282.3,72.2 L287.8,73.2 L293.2,65.8 L298.6,76.2 L304.7,71.5 L309.7,58.4 L309.7,184.0 L32.1,184.0Z" fill="#1a56ff" fill-opacity="0.3"/><clipPath id="cp21"><rect x="32.1" y="0" width="278.1" height="184.5"/></clipPath><path d="M32.1,75.2 L37.5,72.5 L43.5,64.8 L48.6,72.2 L54.3,79.3 L59.5,72.5 L65.4,76.4 L70.8,70.5 L77.1,65.8 L82.6,76.2 L88.0,66.4 L93.6,64.8 L99.0,72.2 L104.5,73.2 L109.6,66.8 L115.5,68.5 L120.5,80.3 L126.4,72.9 L132.7,64.4 L138.2,67.5 L143.6,69.1 L148.3,64.4 L154.2,67.5 L159.8,64.4 L166.0,68.1 L171.6,75.2 L177.0,71.2 L182.5,64.8 L187.9,73.2 L193.8,60.7 L198.9,69.1 L204.8,64.4 L210.7,66.4 L215.7,73.2 L220.8,68.5 L226.7,73.4 L232.6,70.3 L237.6,68.5 L243.5,69.3 L248.6,66.8 L254.5,74.2 L259.9,66.4 L265.8,66.4 L271.3,72.2 L276.4,69.5 L282.3,72.2 L287.8,73.2 L293.2,65.8 L298.6,76.2 L304.7,71.5 L309.7,58.4" fill="none" stroke="#1a56ff" stroke-width="2" stroke-linejoin="round" clip-path="url(#cp21)"/></svg>
<span id="t118" class="t" style="top:468.0px;font-size:12px;line-height:16px;color:#f2f2f2;right:629.5px;">100</span>
<span id="t119" class="t" style="top:553.2px;font-size:12px;line-height:16px;color:#f2f2f2;right:629.5px;">0</span>
<div class="b" style="left:1689px;top:376px;width:318px;height:200px;background:#1b1b1e;"></div>
<div class="b" style="left:1689px;top:376px;width:318px;height:30px;background:#10339f;"></div>
<svg class="b" style="left:1694px;top:381px;color:#fff;" width="20" height="20"><use href="#i-gpu"/></svg>
<svg class="b" style="left:1719px;top:381px;color:#fff;" width="20" height="20"><use href="#i-plug"/></svg>
<span id="t120" class="t" style="top:382.3px;font-size:14px;line-height:18px;color:#fff;letter-spacing:-0.30px;left:1744.7px;">GPU Power</span>
<span id="t121" class="t" style="top:382.3px;font-size:14px;line-height:18px;color:#fff;letter-spacing:-0.02px;right:41.8px;">21,82 W</span>
<svg class="b" style="left:1983.4px;top:382.5px" width="16" height="16" viewBox="0 0 16 16"><circle cx="7.9" cy="8" r="7.8" fill="#00b8ff"/><rect x="7.2" y="5.7" width="1.45" height="6.1" fill="#10339f"/><rect x="7.2" y="2.7" width="1.45" height="1.7" fill="#10339f"/></svg>
<svg class="b" style="left:1689px;top:376px" width="318" height="200"><rect x="27.2" y="75.6" width="282.5" height="1.2" fill="#58585b"/><rect x="27.2" y="129.5" width="282.5" height="1.2" fill="#58585b"/><rect x="27.2" y="183.4" width="282.5" height="1.2" fill="#58585b"/><path d="M27.2,95.1 L29.4,61.7 L33.1,91.7 L37.5,122.4 L41.6,125.4 L46.6,124.1 L52.7,126.4 L57.2,126.4 L65.3,64.8 L70.7,126.4 L94.3,126.4 L97.7,122.4 L103.6,123.4 L109.5,59.4 L114.5,64.8 L122.6,126.4 L131.4,122.4 L137.3,126.4 L160.9,126.4 L167.6,127.9 L171.8,127.9 L176.5,126.4 L182.4,58.4 L188.7,61.4 L195.4,62.4 L199.6,125.4 L204.7,125.4 L210.6,126.6 L233.3,126.6 L239.2,127.9 L244.3,126.8 L261.9,126.8 L267.8,125.4 L273.7,126.8 L281.3,126.8 L284.7,125.4 L290.6,126.8 L300.7,126.8 L309.6,125.4 L309.6,184.0 L27.2,184.0Z" fill="#1a56ff" fill-opacity="0.3"/><clipPath id="cp31"><rect x="27.2" y="0" width="282.9" height="184.5"/></clipPath><path d="M27.2,95.1 L29.4,61.7 L33.1,91.7 L37.5,122.4 L41.6,125.4 L46.6,124.1 L52.7,126.4 L57.2,126.4 L65.3,64.8 L70.7,126.4 L94.3,126.4 L97.7,122.4 L103.6,123.4 L109.5,59.4 L114.5,64.8 L122.6,126.4 L131.4,122.4 L137.3,126.4 L160.9,126.4 L167.6,127.9 L171.8,127.9 L176.5,126.4 L182.4,58.4 L188.7,61.4 L195.4,62.4 L199.6,125.4 L204.7,125.4 L210.6,126.6 L233.3,126.6 L239.2,127.9 L244.3,126.8 L261.9,126.8 L267.8,125.4 L273.7,126.8 L281.3,126.8 L284.7,125.4 L290.6,126.8 L300.7,126.8 L309.6,125.4" fill="none" stroke="#1a56ff" stroke-width="2" stroke-linejoin="round" clip-path="url(#cp31)"/></svg>
<span id="t122" class="t" style="top:445.4px;font-size:12px;line-height:16px;color:#f2f2f2;right:306.4px;">40</span>
<span id="t123" class="t" style="top:499.3px;font-size:12px;line-height:16px;color:#f2f2f2;right:306.4px;">20</span>
<span id="t124" class="t" style="top:553.2px;font-size:12px;line-height:16px;color:#f2f2f2;right:306.4px;">0</span>
<div class="b" style="left:705px;top:586px;width:318px;height:200px;background:#1b1b1e;"></div>
<div class="b" style="left:705px;top:586px;width:318px;height:30px;background:#440a88;"></div>
<svg class="b" style="left:710px;top:591px;color:#fff;" width="20" height="20"><use href="#i-mobo"/></svg>
<svg class="b" style="left:735px;top:591px;color:#fff;" width="20" height="20"><use href="#i-fan"/></svg>
<span id="t125" class="t" style="top:592.3px;font-size:14px;line-height:18px;color:#fff;letter-spacing:-0.90px;left:760.7px;">CPU</span>
<span id="t126" class="t" style="top:592.3px;font-size:14px;line-height:18px;color:#fff;letter-spacing:0.34px;right:1025.5px;">2116 rpm</span>
<svg class="b" style="left:999.4px;top:592.5px" width="16" height="16" viewBox="0 0 16 16"><circle cx="7.9" cy="8" r="7.8" fill="#00b8ff"/><rect x="7.2" y="5.7" width="1.45" height="6.1" fill="#440a88"/><rect x="7.2" y="2.7" width="1.45" height="1.7" fill="#440a88"/></svg>
<svg class="b" style="left:705px;top:586px" width="318" height="200"><rect x="39.1" y="65.8" width="270.6" height="1.2" fill="#58585b"/><rect x="39.1" y="124.5" width="270.6" height="1.2" fill="#58585b"/><rect x="39.1" y="183.4" width="270.6" height="1.2" fill="#58585b"/><path d="M39.1,60.2 L43.9,60.2 L48.9,59.4 L53.1,63.4 L57.3,63.4 L63.2,59.2 L70.0,60.6 L76.7,61.4 L80.9,60.2 L86.0,60.2 L96.1,58.2 L103.7,64.3 L107.9,63.1 L118.0,63.2 L123.4,66.4 L130.3,60.6 L133.5,64.4 L139.2,59.4 L145.5,63.4 L150.8,59.2 L166.0,59.2 L171.9,60.2 L177.3,58.2 L182.5,64.4 L188.4,59.4 L194.7,64.3 L199.7,63.4 L204.8,63.4 L209.3,59.4 L215.7,64.3 L230.9,64.3 L236.8,63.1 L242.7,60.2 L247.2,59.4 L253.6,62.7 L258.7,64.4 L264.2,63.4 L269.3,60.4 L275.5,64.4 L282.3,65.4 L285.6,64.3 L296.6,64.3 L301.6,59.4 L309.7,59.4 L309.7,184.0 L39.1,184.0Z" fill="#6e00ee" fill-opacity="0.3"/><clipPath id="cp02"><rect x="39.1" y="0" width="271.0" height="184.5"/></clipPath><path d="M39.1,60.2 L43.9,60.2 L48.9,59.4 L53.1,63.4 L57.3,63.4 L63.2,59.2 L70.0,60.6 L76.7,61.4 L80.9,60.2 L86.0,60.2 L96.1,58.2 L103.7,64.3 L107.9,63.1 L118.0,63.2 L123.4,66.4 L130.3,60.6 L133.5,64.4 L139.2,59.4 L145.5,63.4 L150.8,59.2 L166.0,59.2 L171.9,60.2 L177.3,58.2 L182.5,64.4 L188.4,59.4 L194.7,64.3 L199.7,63.4 L204.8,63.4 L209.3,59.4 L215.7,64.3 L230.9,64.3 L236.8,63.1 L242.7,60.2 L247.2,59.4 L253.6,62.7 L258.7,64.4 L264.2,63.4 L269.3,60.4 L275.5,64.4 L282.3,65.4 L285.6,64.3 L296.6,64.3 L301.6,59.4 L309.7,59.4" fill="none" stroke="#6e00ee" stroke-width="2" stroke-linejoin="round" clip-path="url(#cp02)"/></svg>
<span id="t127" class="t" style="top:645.6px;font-size:12px;line-height:16px;color:#f2f2f2;right:1278.5px;">2000</span>
<span id="t128" class="t" style="top:704.3px;font-size:12px;line-height:16px;color:#f2f2f2;right:1278.5px;">1000</span>
<span id="t129" class="t" style="top:763.2px;font-size:12px;line-height:16px;color:#f2f2f2;right:1278.5px;">0</span>
<div class="b" style="left:1033px;top:586px;width:318px;height:200px;background:#1b1b1e;"></div>
<div class="b" style="left:1033px;top:586px;width:318px;height:30px;background:#440a88;"></div>
<svg class="b" style="left:1038px;top:591px;color:#fff;" width="20" height="20"><use href="#i-gpu"/></svg>
<svg class="b" style="left:1063px;top:591px;color:#fff;" width="20" height="20"><use href="#i-fan"/></svg>
<span id="t130" class="t" style="top:592.3px;font-size:14px;line-height:18px;color:#fff;letter-spacing:-0.66px;left:1088.7px;">GPU Fan1</span>
<span id="t131" class="t" style="top:592.3px;font-size:14px;line-height:18px;color:#fff;letter-spacing:0.18px;right:697.6px;">0 rpm</span>
<svg class="b" style="left:1327.4px;top:592.5px" width="16" height="16" viewBox="0 0 16 16"><circle cx="7.9" cy="8" r="7.8" fill="#00b8ff"/><rect x="7.2" y="5.7" width="1.45" height="6.1" fill="#440a88"/><rect x="7.2" y="2.7" width="1.45" height="1.7" fill="#440a88"/></svg>
<svg class="b" style="left:1033px;top:586px" width="318" height="200"><rect x="32.1" y="45.3" width="277.7" height="1.2" fill="#58585b"/><rect x="32.1" y="114.4" width="277.7" height="1.2" fill="#58585b"/><rect x="32.1" y="183.4" width="277.7" height="1.2" fill="#58585b"/><path d="M32.1,184.0 L309.7,184.0 L309.7,184.0 L32.1,184.0Z" fill="#6e00ee" fill-opacity="0.3"/><clipPath id="cp12"><rect x="32.1" y="0" width="278.1" height="184.5"/></clipPath><path d="M32.1,184.0 L309.7,184.0" fill="none" stroke="#6e00ee" stroke-width="2" stroke-linejoin="round" clip-path="url(#cp12)"/></svg>
<span id="t132" class="t" style="top:625.1px;font-size:12px;line-height:16px;color:#f2f2f2;right:957.5px;">100</span>
<span id="t133" class="t" style="top:694.2px;font-size:12px;line-height:16px;color:#f2f2f2;right:957.5px;">50</span>
<span id="t134" class="t" style="top:763.2px;font-size:12px;line-height:16px;color:#f2f2f2;right:957.5px;">0</span>
<div class="b" style="left:1361px;top:586px;width:318px;height:200px;background:#1b1b1e;"></div>
<div class="b" style="left:1361px;top:586px;width:318px;height:30px;background:#440a88;"></div>
<svg class="b" style="left:1366px;top:591px;color:#fff;" width="20" height="20"><use href="#i-gpu"/></svg>
<svg class="b" style="left:1391px;top:591px;color:#fff;" width="20" height="20"><use href="#i-fan"/></svg>
<span id="t135" class="t" style="top:592.3px;font-size:14px;line-height:18px;color:#fff;letter-spacing:-0.59px;left:1416.7px;">GPU Fan2</span>
<span id="t136" class="t" style="top:592.3px;font-size:14px;line-height:18px;color:#fff;letter-spacing:0.18px;right:369.6px;">0 rpm</span>
<svg class="b" style="left:1655.4px;top:592.5px" width="16" height="16" viewBox="0 0 16 16"><circle cx="7.9" cy="8" r="7.8" fill="#00b8ff"/><rect x="7.2" y="5.7" width="1.45" height="6.1" fill="#440a88"/><rect x="7.2" y="2.7" width="1.45" height="1.7" fill="#440a88"/></svg>
<svg class="b" style="left:1361px;top:586px" width="318" height="200"><rect x="32.1" y="45.3" width="277.7" height="1.2" fill="#58585b"/><rect x="32.1" y="114.4" width="277.7" height="1.2" fill="#58585b"/><rect x="32.1" y="183.4" width="277.7" height="1.2" fill="#58585b"/><path d="M32.1,184.0 L309.7,184.0 L309.7,184.0 L32.1,184.0Z" fill="#6e00ee" fill-opacity="0.3"/><clipPath id="cp22"><rect x="32.1" y="0" width="278.1" height="184.5"/></clipPath><path d="M32.1,184.0 L309.7,184.0" fill="none" stroke="#6e00ee" stroke-width="2" stroke-linejoin="round" clip-path="url(#cp22)"/></svg>
<span id="t137" class="t" style="top:625.1px;font-size:12px;line-height:16px;color:#f2f2f2;right:629.5px;">100</span>
<span id="t138" class="t" style="top:694.2px;font-size:12px;line-height:16px;color:#f2f2f2;right:629.5px;">50</span>
<span id="t139" class="t" style="top:763.2px;font-size:12px;line-height:16px;color:#f2f2f2;right:629.5px;">0</span>
<div class="b" style="left:1689px;top:586px;width:318px;height:200px;background:#1b1b1e;"></div>
<div class="b" style="left:1689px;top:586px;width:318px;height:30px;background:#8a3068;"></div>
<svg class="b" style="left:1694px;top:591px;color:#fff;" width="20" height="20"><use href="#i-cpu"/></svg>
<svg class="b" style="left:1719px;top:591px;color:#fff;" width="20" height="20"><use href="#i-clock"/></svg>
<span id="t140" class="t" style="top:592.3px;font-size:14px;line-height:18px;color:#fff;letter-spacing:-0.06px;left:1744.7px;">P-core 0 Clock</span>
<span id="t141" class="t" style="top:592.3px;font-size:14px;line-height:18px;color:#fff;letter-spacing:0.02px;right:41.8px;">4489,02 MHz</span>
<svg class="b" style="left:1983.4px;top:592.5px" width="16" height="16" viewBox="0 0 16 16"><circle cx="7.9" cy="8" r="7.8" fill="#00b8ff"/><rect x="7.2" y="5.7" width="1.45" height="6.1" fill="#8a3068"/><rect x="7.2" y="2.7" width="1.45" height="1.7" fill="#8a3068"/></svg>
<svg class="b" style="left:1689px;top:586px" width="318" height="200"><rect x="40.1" y="71.7" width="269.6" height="1.2" fill="#58585b"/><rect x="40.1" y="127.7" width="269.6" height="1.2" fill="#58585b"/><rect x="40.1" y="183.4" width="269.6" height="1.2" fill="#58585b"/><path d="M40.1,58.4 L309.6,58.4 L309.6,184.0 L40.1,184.0Z" fill="#e040a8" fill-opacity="0.3"/><clipPath id="cp32"><rect x="40.1" y="0" width="270.0" height="184.5"/></clipPath><path d="M40.1,58.4 L309.6,58.4" fill="none" stroke="#e040a8" stroke-width="2" stroke-linejoin="round" clip-path="url(#cp32)"/></svg>
<span id="t142" class="t" style="top:651.5px;font-size:12px;line-height:16px;color:#f2f2f2;right:293.5px;">4000</span>
<span id="t143" class="t" style="top:707.5px;font-size:12px;line-height:16px;color:#f2f2f2;right:293.5px;">2000</span>
<span id="t144" class="t" style="top:763.2px;font-size:12px;line-height:16px;color:#f2f2f2;right:293.5px;">0</span>
<div class="b" style="left:705px;top:796px;width:318px;height:200px;background:#1b1b1e;"></div>
<div class="b" style="left:705px;top:796px;width:318px;height:30px;background:#8a3068;"></div>
<svg class="b" style="left:710px;top:801px;color:#fff;" width="20" height="20"><use href="#i-gpu"/></svg>
<svg class="b" style="left:735px;top:801px;color:#fff;" width="20" height="20"><use href="#i-clock"/></svg>
<span id="t145" class="t" style="top:802.3px;font-size:14px;line-height:18px;color:#fff;letter-spacing:-0.53px;left:760.7px;">GPU Clock</span>
<span id="t146" class="t" style="top:802.3px;font-size:14px;line-height:18px;color:#fff;letter-spacing:0.02px;right:1025.8px;">1605,00 MHz</span>
<svg class="b" style="left:999.4px;top:802.5px" width="16" height="16" viewBox="0 0 16 16"><circle cx="7.9" cy="8" r="7.8" fill="#00b8ff"/><rect x="7.2" y="5.7" width="1.45" height="6.1" fill="#8a3068"/><rect x="7.2" y="2.7" width="1.45" height="1.7" fill="#8a3068"/></svg>
<svg class="b" style="left:705px;top:796px" width="318" height="200"><rect x="39.1" y="104.9" width="270.6" height="1.2" fill="#58585b"/><rect x="39.1" y="183.4" width="270.6" height="1.2" fill="#58585b"/><path d="M39.1,111.9 L41.3,58.4 L48.6,137.2 L53.5,153.0 L57.7,118.7 L63.2,152.4 L68.6,154.4 L76.4,58.4 L80.6,154.4 L84.8,154.4 L90.7,160.6 L103.7,160.6 L106.2,98.5 L111.6,149.0 L117.5,58.0 L123.0,58.0 L130.6,154.7 L133.5,154.7 L139.6,145.3 L145.8,154.4 L150.0,154.4 L158.4,160.6 L182.5,160.6 L187.4,58.0 L200.6,58.0 L203.9,147.3 L214.9,160.6 L301.6,160.6 L309.4,58.4 L309.4,184.0 L39.1,184.0Z" fill="#e040a8" fill-opacity="0.3"/><clipPath id="cp03"><rect x="39.1" y="0" width="271.0" height="184.5"/></clipPath><path d="M39.1,111.9 L41.3,58.4 L48.6,137.2 L53.5,153.0 L57.7,118.7 L63.2,152.4 L68.6,154.4 L76.4,58.4 L80.6,154.4 L84.8,154.4 L90.7,160.6 L103.7,160.6 L106.2,98.5 L111.6,149.0 L117.5,58.0 L123.0,58.0 L130.6,154.7 L133.5,154.7 L139.6,145.3 L145.8,154.4 L150.0,154.4 L158.4,160.6 L182.5,160.6 L187.4,58.0 L200.6,58.0 L203.9,147.3 L214.9,160.6 L301.6,160.6 L309.4,58.4" fill="none" stroke="#e040a8" stroke-width="2" stroke-linejoin="round" clip-path="url(#cp03)"/></svg>
<span id="t147" class="t" style="top:894.7px;font-size:12px;line-height:16px;color:#f2f2f2;right:1278.5px;">1000</span>
<span id="t148" class="t" style="top:973.2px;font-size:12px;line-height:16px;color:#f2f2f2;right:1278.5px;">0</span>
<div class="b" style="left:1033px;top:796px;width:318px;height:200px;background:#1b1b1e;"></div>
<div class="b" style="left:1033px;top:796px;width:318px;height:30px;background:#8a3068;"></div>
<svg class="b" style="left:1038px;top:801px;color:#fff;" width="20" height="20"><use href="#i-gpu"/></svg>
<svg class="b" style="left:1063px;top:801px;color:#fff;" width="20" height="20"><use href="#i-clock"/></svg>
<span id="t149" class="t" style="top:802.3px;font-size:14px;line-height:18px;color:#fff;letter-spacing:-0.11px;left:1088.7px;">GPU Memory Clock</span>
<span id="t150" class="t" style="top:802.3px;font-size:14px;line-height:18px;color:#fff;letter-spacing:0.02px;right:697.8px;">1750,25 MHz</span>
<svg class="b" style="left:1327.4px;top:802.5px" width="16" height="16" viewBox="0 0 16 16"><circle cx="7.9" cy="8" r="7.8" fill="#00b8ff"/><rect x="7.2" y="5.7" width="1.45" height="6.1" fill="#8a3068"/><rect x="7.2" y="2.7" width="1.45" height="1.7" fill="#8a3068"/></svg>
<svg class="b" style="left:1033px;top:796px" width="318" height="200"><rect x="39.1" y="111.8" width="270.6" height="1.2" fill="#58585b"/><rect x="39.1" y="183.4" width="270.6" height="1.2" fill="#58585b"/><path d="M39.1,118.7 L41.3,58.4 L48.6,169.2 L57.7,169.2 L63.6,176.3 L68.6,176.3 L76.4,58.4 L80.6,176.3 L103.7,176.3 L106.2,94.6 L111.6,169.6 L117.5,58.0 L123.0,58.0 L130.6,176.3 L182.5,176.3 L187.4,58.0 L200.6,58.0 L203.9,169.6 L209.5,176.3 L301.6,176.3 L309.4,58.4 L309.4,184.0 L39.1,184.0Z" fill="#e040a8" fill-opacity="0.3"/><clipPath id="cp13"><rect x="39.1" y="0" width="271.0" height="184.5"/></clipPath><path d="M39.1,118.7 L41.3,58.4 L48.6,169.2 L57.7,169.2 L63.6,176.3 L68.6,176.3 L76.4,58.4 L80.6,176.3 L103.7,176.3 L106.2,94.6 L111.6,169.6 L117.5,58.0 L123.0,58.0 L130.6,176.3 L182.5,176.3 L187.4,58.0 L200.6,58.0 L203.9,169.6 L209.5,176.3 L301.6,176.3 L309.4,58.4" fill="none" stroke="#e040a8" stroke-width="2" stroke-linejoin="round" clip-path="url(#cp13)"/></svg>
<span id="t151" class="t" style="top:901.6px;font-size:12px;line-height:16px;color:#f2f2f2;right:950.5px;">1000</span>
<span id="t152" class="t" style="top:973.2px;font-size:12px;line-height:16px;color:#f2f2f2;right:950.5px;">0</span>
<div class="b" style="left:1361px;top:796px;width:318px;height:200px;background:#1b1b1e;"></div>
<div class="b" style="left:1361px;top:796px;width:318px;height:30px;background:#8a234c;"></div>
<svg class="b" style="left:1366px;top:801px;color:#fff;" width="20" height="20"><use href="#i-help"/></svg>
<svg class="b" style="left:1391px;top:801px;color:#fff;" width="20" height="20"><use href="#i-usage"/></svg>
<span id="t153" class="t" style="top:802.3px;font-size:14px;line-height:18px;color:#fff;letter-spacing:0.12px;left:1416.7px;">Physical Memory Load</span>
<span id="t154" class="t" style="top:802.3px;font-size:14px;line-height:18px;color:#fff;letter-spacing:0.02px;right:369.8px;">25,50 %</span>
<svg class="b" style="left:1655.4px;top:802.5px" width="16" height="16" viewBox="0 0 16 16"><circle cx="7.9" cy="8" r="7.8" fill="#00b8ff"/><rect x="7.2" y="5.7" width="1.45" height="6.1" fill="#8a234c"/><rect x="7.2" y="2.7" width="1.45" height="1.7" fill="#8a234c"/></svg>
<svg class="b" style="left:1361px;top:796px" width="318" height="200"><rect x="32.1" y="45.3" width="277.7" height="1.2" fill="#58585b"/><rect x="32.1" y="114.4" width="277.7" height="1.2" fill="#58585b"/><rect x="32.1" y="183.4" width="277.7" height="1.2" fill="#58585b"/><path d="M32.1,149.5 L37.1,149.5 L43.9,147.8 L70.0,147.8 L76.7,149.5 L109.6,149.5 L120.5,147.0 L132.3,147.0 L138.2,148.3 L154.2,148.3 L159.8,149.8 L165.2,148.3 L210.7,148.3 L216.6,149.5 L254.5,149.5 L259.5,148.3 L309.7,148.3 L309.7,184.0 L32.1,184.0Z" fill="#e02a70" fill-opacity="0.3"/><clipPath id="cp23"><rect x="32.1" y="0" width="278.1" height="184.5"/></clipPath><path d="M32.1,149.5 L37.1,149.5 L43.9,147.8 L70.0,147.8 L76.7,149.5 L109.6,149.5 L120.5,147.0 L132.3,147.0 L138.2,148.3 L154.2,148.3 L159.8,149.8 L165.2,148.3 L210.7,148.3 L216.6,149.5 L254.5,149.5 L259.5,148.3 L309.7,148.3" fill="none" stroke="#e02a70" stroke-width="2" stroke-linejoin="round" clip-path="url(#cp23)"/></svg>
<span id="t155" class="t" style="top:835.1px;font-size:12px;line-height:16px;color:#f2f2f2;right:629.5px;">100</span>
<span id="t156" class="t" style="top:904.2px;font-size:12px;line-height:16px;color:#f2f2f2;right:629.5px;">50</span>
<span id="t157" class="t" style="top:973.2px;font-size:12px;line-height:16px;color:#f2f2f2;right:629.5px;">0</span>
<div class="b" style="left:1689px;top:796px;width:318px;height:200px;background:#1b1b1e;"></div>
<div class="b" style="left:1689px;top:796px;width:318px;height:30px;background:#8a234c;"></div>
<svg class="b" style="left:1694px;top:801px;color:#fff;" width="20" height="20"><use href="#i-cpu"/></svg>
<svg class="b" style="left:1719px;top:801px;color:#fff;" width="20" height="20"><use href="#i-usage"/></svg>
<span id="t158" class="t" style="top:802.3px;font-size:14px;line-height:18px;color:#fff;letter-spacing:-0.10px;left:1744.7px;">Total CPU Usage</span>
<span id="t159" class="t" style="top:802.3px;font-size:14px;line-height:18px;color:#fff;letter-spacing:-0.02px;right:41.8px;">100,00 %</span>
<svg class="b" style="left:1983.4px;top:802.5px" width="16" height="16" viewBox="0 0 16 16"><circle cx="7.9" cy="8" r="7.8" fill="#00b8ff"/><rect x="7.2" y="5.7" width="1.45" height="6.1" fill="#8a234c"/><rect x="7.2" y="2.7" width="1.45" height="1.7" fill="#8a234c"/></svg>
<svg class="b" style="left:1689px;top:796px" width="318" height="200"><rect x="32.3" y="45.3" width="277.4" height="1.2" fill="#58585b"/><rect x="32.3" y="114.4" width="277.4" height="1.2" fill="#58585b"/><rect x="32.3" y="183.4" width="277.4" height="1.2" fill="#58585b"/><path d="M32.3,46.6 L309.6,46.6 L309.6,184.0 L32.3,184.0Z" fill="#e02a70" fill-opacity="0.3"/><clipPath id="cp33"><rect x="32.3" y="0" width="277.8" height="184.5"/></clipPath><path d="M32.3,46.6 L309.6,46.6" fill="none" stroke="#e02a70" stroke-width="2" stroke-linejoin="round" clip-path="url(#cp33)"/></svg>
<span id="t160" class="t" style="top:835.1px;font-size:12px;line-height:16px;color:#f2f2f2;right:301.3px;">100</span>
<span id="t161" class="t" style="top:904.2px;font-size:12px;line-height:16px;color:#f2f2f2;right:301.3px;">50</span>
<span id="t162" class="t" style="top:973.2px;font-size:12px;line-height:16px;color:#f2f2f2;right:301.3px;">0</span>
<div class="b" style="left:705px;top:1006px;width:318px;height:200px;background:#1b1b1e;"></div>
<div class="b" style="left:705px;top:1006px;width:318px;height:30px;background:#8a234c;"></div>
<svg class="b" style="left:710px;top:1011px;color:#fff;" width="20" height="20"><use href="#i-gpu"/></svg>
<svg class="b" style="left:735px;top:1011px;color:#fff;" width="20" height="20"><use href="#i-usage"/></svg>
<span id="t163" class="t" style="top:1012.3px;font-size:14px;line-height:18px;color:#fff;letter-spacing:-0.38px;left:760.7px;">GPU Core Load</span>
<span id="t164" class="t" style="top:1012.3px;font-size:14px;line-height:18px;color:#fff;letter-spacing:-0.12px;right:1025.9px;">7,00 %</span>
<svg class="b" style="left:999.4px;top:1012.5px" width="16" height="16" viewBox="0 0 16 16"><circle cx="7.9" cy="8" r="7.8" fill="#00b8ff"/><rect x="7.2" y="5.7" width="1.45" height="6.1" fill="#8a234c"/><rect x="7.2" y="2.7" width="1.45" height="1.7" fill="#8a234c"/></svg>
<svg class="b" style="left:705px;top:1006px" width="318" height="200"><rect x="32.1" y="45.3" width="277.7" height="1.2" fill="#58585b"/><rect x="32.1" y="114.4" width="277.7" height="1.2" fill="#58585b"/><rect x="32.1" y="183.4" width="277.7" height="1.2" fill="#58585b"/><path d="M32.1,172.6 L34.9,167.5 L42.5,181.4 L46.4,167.2 L51.9,168.4 L56.8,159.6 L62.9,178.5 L70.8,164.5 L74.5,178.5 L78.4,172.3 L84.8,178.0 L91.0,178.0 L99.0,170.9 L101.7,157.4 L106.7,170.1 L113.4,175.1 L118.0,175.5 L125.1,174.6 L128.6,170.9 L134.8,170.2 L140.7,181.4 L146.1,177.1 L153.4,174.6 L156.7,170.6 L162.3,178.5 L169.7,171.2 L178.6,178.5 L184.5,163.8 L190.4,181.0 L197.2,182.7 L201.4,175.5 L207.3,178.5 L212.3,179.7 L218.6,166.4 L229.2,171.8 L234.2,178.0 L240.1,179.7 L245.5,178.5 L256.1,171.2 L262.9,177.6 L267.9,179.7 L273.8,178.5 L282.6,174.8 L284.8,167.5 L290.7,177.1 L295.7,179.3 L301.6,178.2 L309.7,174.3 L309.7,184.0 L32.1,184.0Z" fill="#e02a70" fill-opacity="0.3"/><clipPath id="cp04"><rect x="32.1" y="0" width="278.1" height="184.5"/></clipPath><path d="M32.1,172.6 L34.9,167.5 L42.5,181.4 L46.4,167.2 L51.9,168.4 L56.8,159.6 L62.9,178.5 L70.8,164.5 L74.5,178.5 L78.4,172.3 L84.8,178.0 L91.0,178.0 L99.0,170.9 L101.7,157.4 L106.7,170.1 L113.4,175.1 L118.0,175.5 L125.1,174.6 L128.6,170.9 L134.8,170.2 L140.7,181.4 L146.1,177.1 L153.4,174.6 L156.7,170.6 L162.3,178.5 L169.7,171.2 L178.6,178.5 L184.5,163.8 L190.4,181.0 L197.2,182.7 L201.4,175.5 L207.3,178.5 L212.3,179.7 L218.6,166.4 L229.2,171.8 L234.2,178.0 L240.1,179.7 L245.5,178.5 L256.1,171.2 L262.9,177.6 L267.9,179.7 L273.8,178.5 L282.6,174.8 L284.8,167.5 L290.7,177.1 L295.7,179.3 L301.6,178.2 L309.7,174.3" fill="none" stroke="#e02a70" stroke-width="2" stroke-linejoin="round" clip-path="url(#cp04)"/></svg>
<span id="t165" class="t" style="top:1045.1px;font-size:12px;line-height:16px;color:#f2f2f2;right:1285.5px;">100</span>
<span id="t166" class="t" style="top:1114.2px;font-size:12px;line-height:16px;color:#f2f2f2;right:1285.5px;">50</span>
<span id="t167" class="t" style="top:1183.2px;font-size:12px;line-height:16px;color:#f2f2f2;right:1285.5px;">0</span>
<div class="b" style="left:1033px;top:1006px;width:318px;height:200px;background:#1b1b1e;"></div>
<div class="b" style="left:1033px;top:1006px;width:318px;height:30px;background:#8a234c;"></div>
<svg class="b" style="left:1038px;top:1011px;color:#fff;" width="20" height="20"><use href="#i-gpu"/></svg>
<svg class="b" style="left:1063px;top:1011px;color:#fff;" width="20" height="20"><use href="#i-usage"/></svg>
<span id="t168" class="t" style="top:1012.3px;font-size:14px;line-height:18px;color:#fff;letter-spacing:-0.11px;left:1088.7px;">GPU Memory Usage</span>
<span id="t169" class="t" style="top:1012.3px;font-size:14px;line-height:18px;color:#fff;letter-spacing:0.02px;right:697.8px;">15,45 %</span>
<svg class="b" style="left:1327.4px;top:1012.5px" width="16" height="16" viewBox="0 0 16 16"><circle cx="7.9" cy="8" r="7.8" fill="#00b8ff"/><rect x="7.2" y="5.7" width="1.45" height="6.1" fill="#8a234c"/><rect x="7.2" y="2.7" width="1.45" height="1.7" fill="#8a234c"/></svg>
<svg class="b" style="left:1033px;top:1006px" width="318" height="200"><rect x="32.1" y="45.3" width="277.7" height="1.2" fill="#58585b"/><rect x="32.1" y="114.4" width="277.7" height="1.2" fill="#58585b"/><rect x="32.1" y="183.4" width="277.7" height="1.2" fill="#58585b"/><path d="M32.1,162.5 L106.2,162.5 L117.2,160.0 L128.1,160.0 L134.8,161.3 L145.0,161.3 L154.2,162.5 L309.7,162.5 L309.7,184.0 L32.1,184.0Z" fill="#e02a70" fill-opacity="0.3"/><clipPath id="cp14"><rect x="32.1" y="0" width="278.1" height="184.5"/></clipPath><path d="M32.1,162.5 L106.2,162.5 L117.2,160.0 L128.1,160.0 L134.8,161.3 L145.0,161.3 L154.2,162.5 L309.7,162.5" fill="none" stroke="#e02a70" stroke-width="2" stroke-linejoin="round" clip-path="url(#cp14)"/></svg>
<span id="t170" class="t" style="top:1045.1px;font-size:12px;line-height:16px;color:#f2f2f2;right:957.5px;">100</span>
<span id="t171" class="t" style="top:1114.2px;font-size:12px;line-height:16px;color:#f2f2f2;right:957.5px;">50</span>
<span id="t172" class="t" style="top:1183.2px;font-size:12px;line-height:16px;color:#f2f2f2;right:957.5px;">0</span>
<div class="b" style="left:50px;top:541px;width:634px;height:791px;background:#fff;border-radius:8px;overflow:hidden;box-shadow:0 0 0 1px rgba(90,90,90,.5);">
<div class="b" style="left:0.0px;top:0.0px;width:634px;height:30px;background:#f3f3f3;"></div>
<svg class="b" style="left:7.5px;top:6px" width="16.5" height="16.5" viewBox="0 0 16 16"><defs><linearGradient id="hg" x1="0" y1="0" x2="0" y2="1"><stop offset="0" stop-color="#c20008"/><stop offset="1" stop-color="#7c0004"/></linearGradient></defs><rect width="16" height="16" fill="url(#hg)"/><path d="M9.1,2.1L4.9,8.8H7.9L7.1,14L11.2,6.9H8.6z" fill="#fff"/></svg>
<span id="t173" class="t" style="top:6.5px;font-size:12px;line-height:16px;color:#8c8c8c;letter-spacing:0.25px;left:29.6px;">HWMonitor</span>
<svg class="b" style="left:510px;top:4px" width="115" height="22"><g fill="none" stroke="#8a8a8a" stroke-width="1"><path d="M5,10.5H15"/><rect x="50.5" y="5.5" width="9" height="9" rx="1"/><path d="M96,5L106,15M106,5L96,15"/></g></svg>
<span id="t174" class="t" style="top:31.5px;font-size:12px;line-height:16px;color:#6e6e6e;letter-spacing:-0.55px;left:7.3px;">File</span>
<span id="t175" class="t" style="top:31.5px;font-size:12px;line-height:16px;color:#6e6e6e;letter-spacing:-0.37px;left:39.0px;">View</span>
<span id="t176" class="t" style="top:31.5px;font-size:12px;line-height:16px;color:#6e6e6e;letter-spacing:-0.18px;left:78.7px;">Tools</span>
<span id="t177" class="t" style="top:31.5px;font-size:12px;line-height:16px;color:#6e6e6e;letter-spacing:-0.20px;left:120.4px;">Help</span>
<div class="b" style="left:0.0px;top:50.0px;width:634px;height:1.6px;background:#707070;"></div>
<div class="b" style="left:0.0px;top:52.0px;width:634px;height:18px;background:#f0f0f0;border-bottom:1px solid #a3a3a3;box-sizing:border-box;"></div>
<div class="b" style="left:240.0px;top:52.0px;width:1px;height:18px;background:#a3a3a3;"></div>
<div class="b" style="left:241.0px;top:52.0px;width:1px;height:17px;background:#fff;"></div>
<div class="b" style="left:327.0px;top:52.0px;width:1px;height:18px;background:#a3a3a3;"></div>
<div class="b" style="left:328.0px;top:52.0px;width:1px;height:17px;background:#fff;"></div>
<div class="b" style="left:414.0px;top:52.0px;width:1px;height:18px;background:#a3a3a3;"></div>
<div class="b" style="left:415.0px;top:52.0px;width:1px;height:17px;background:#fff;"></div>
<div class="b" style="left:501.0px;top:52.0px;width:1px;height:18px;background:#a3a3a3;"></div>
<div class="b" style="left:502.0px;top:52.0px;width:1px;height:17px;background:#fff;"></div>
<span id="t178" class="t" style="top:54.3px;font-size:12px;line-height:16px;color:#000;letter-spacing:0.43px;left:7.8px;">Sensor</span>
<span id="t179" class="t" style="top:54.3px;font-size:12px;line-height:16px;color:#000;letter-spacing:0.30px;left:247.6px;">Value</span>
<span id="t180" class="t" style="top:54.3px;font-size:12px;line-height:16px;color:#000;letter-spacing:0.08px;left:335.0px;">Min</span>
<span id="t181" class="t" style="top:54.3px;font-size:12px;line-height:16px;color:#000;letter-spacing:-0.59px;left:421.8px;">Max</span>
<div class="b" style="left:0.0px;top:50.0px;width:1.4px;height:721px;background:#8c8c8c;"></div>
<div class="b" style="left:632.3px;top:50.0px;width:2px;height:721px;background:#fff;"></div>
<div class="b" style="left:616.0px;top:71.0px;width:16.3px;height:700px;background:#f0f0f0;"></div>
<div class="b" style="left:623.0px;top:88.0px;width:2px;height:145px;background:#8c8c8c;"></div>
<div class="b" style="left:0.0px;top:771.0px;width:634px;height:20px;background:#f0f0f0;border-top:1px solid #fff;"></div>
<span id="t182" class="t" style="top:774.7px;font-size:12px;line-height:16px;color:#000;letter-spacing:-0.80px;left:2.5px;">Ready</span>
<div class="b" style="left:515.0px;top:774.0px;width:28px;height:18px;background:#f0f0f0;border-left:1px solid #a0a0a0;border-top:1px solid #a0a0a0;border-right:1px solid #fff;box-sizing:border-box;"></div>
<div class="b" style="left:546.0px;top:774.0px;width:33px;height:18px;background:#f0f0f0;border-left:1px solid #a0a0a0;border-top:1px solid #a0a0a0;border-right:1px solid #fff;box-sizing:border-box;"></div>
<div class="b" style="left:582.0px;top:774.0px;width:32px;height:18px;background:#f0f0f0;border-left:1px solid #a0a0a0;border-top:1px solid #a0a0a0;border-right:1px solid #fff;box-sizing:border-box;"></div>
<svg class="b" style="left:620px;top:777px" width="14" height="14"><path d="M2,14L14,2M6,14L14,6M10,14L14,10" stroke="#a0a0a0" stroke-width="1" fill="none"/></svg>
<svg class="b" style="left:21.0px;top:73.0px" width="16" height="16" viewBox="0 0 16 16"><defs><linearGradient id="pcg" x1="0" y1="0" x2="1" y2="1"><stop offset="0" stop-color="#8fd3ff"/><stop offset="1" stop-color="#1e9bf0"/></linearGradient></defs><rect x="0" y="0" width="16" height="10.5" fill="#1a78c2"/><rect x="0.8" y="0.8" width="14.4" height="8.9" fill="url(#pcg)"/><rect x="4.5" y="11.3" width="7" height="0.9" fill="#9fb4c8"/><rect x="0.2" y="14" width="15.6" height="1" fill="#a9bdd0"/></svg>
<span id="t183" class="t" style="top:71.8px;font-size:12px;line-height:16px;color:#000;letter-spacing:-0.38px;left:42.3px;">DOM</span>
<div class="b" style="left:59.0px;top:90.0px;width:556px;height:16px;background:#d5e5f3;"></div>
<svg class="b" style="left:40.0px;top:90.0px" width="16" height="16" viewBox="0 0 16 16"><rect width="16" height="16" fill="#1f3a7a"/><rect x="1.3" y="1.3" width="1.6" height="7" fill="#d9d0b4"/><rect x="4" y="1.3" width="1.1" height="7" fill="#d9d0b4"/><rect x="6" y="1.3" width="1.1" height="7" fill="#d9d0b4"/><rect x="9" y="3" width="5" height="5.2" fill="#cfc7a6"/><rect x="10.5" y="4.4" width="2" height="2.4" fill="#7b8fc0"/><rect x="6.5" y="12" width="8" height="1.1" fill="#d8c648"/><rect x="6.5" y="13.8" width="8" height="1.1" fill="#d8c648"/><rect x="1.5" y="11" width="3" height="3.4" fill="#35508f"/></svg>
<span id="t184" class="t" style="top:89.8px;font-size:12px;line-height:16px;color:#000;letter-spacing:-0.10px;left:61.0px;">Micro-Star International Co. Lt...</span>
<svg class="b" style="left:59.0px;top:108.0px" width="16" height="16" viewBox="0 0 16 16"><path d="M0.3,10.2L6.8,3.8L9,6.6L15.6,4.4L8.6,11.6L6.5,8.6z" fill="#f2c21c" stroke="#8a6a10" stroke-width="0.7" stroke-linejoin="round"/></svg>
<span id="t185" class="t" style="top:107.8px;font-size:12px;line-height:16px;color:#000;letter-spacing:-0.15px;left:80.0px;">Voltages</span>
<svg class="b" style="left:59.0px;top:126.0px" width="16" height="16" viewBox="0 0 16 16"><path d="M4.3,11.2L13.6,1.6" stroke="#c9c9c9" stroke-width="2.6" stroke-linecap="round"/><path d="M4.3,11.2L10,5.3" stroke="#ee1c25" stroke-width="1.6" stroke-linecap="round"/><circle cx="3.8" cy="11.9" r="3.1" fill="#ee1c25"/><circle cx="3" cy="11.2" r="0.9" fill="#ffb0b0"/></svg>
<span id="t186" class="t" style="top:125.8px;font-size:12px;line-height:16px;color:#000;letter-spacing:-0.13px;left:80.0px;">Temperatures</span>
<div class="b" style="left:97.0px;top:143.0px;width:518px;height:18px;background:#f0f0f0;"></div>
<span id="t187" class="t" style="top:143.8px;font-size:12px;line-height:16px;color:#000;letter-spacing:-0.71px;left:99.5px;">CPU Core</span>
<span id="t188" class="t" style="top:143.8px;font-size:12px;line-height:16px;color:#000;letter-spacing:-0.65px;right:307.4px;">78.0 °C</span>
<span id="t189" class="t" style="top:143.8px;font-size:12px;line-height:16px;color:#000;letter-spacing:-0.65px;right:220.7px;">36.0 °C</span>
<span id="t190" class="t" style="top:143.8px;font-size:12px;line-height:16px;color:#000;letter-spacing:-0.65px;right:133.7px;">80.0 °C</span>
<span id="t191" class="t" style="top:161.8px;font-size:12px;line-height:16px;color:#000;letter-spacing:-0.90px;left:99.5px;">SYS</span>
<span id="t192" class="t" style="top:161.8px;font-size:12px;line-height:16px;color:#000;letter-spacing:-0.65px;right:307.4px;">32.0 °C</span>
<span id="t193" class="t" style="top:161.8px;font-size:12px;line-height:16px;color:#000;letter-spacing:-0.65px;right:220.7px;">31.0 °C</span>
<span id="t194" class="t" style="top:161.8px;font-size:12px;line-height:16px;color:#000;letter-spacing:-0.65px;right:133.7px;">34.0 °C</span>
<div class="b" style="left:97.0px;top:179.0px;width:518px;height:18px;background:#f0f0f0;"></div>
<span id="t195" class="t" style="top:179.8px;font-size:12px;line-height:16px;color:#000;letter-spacing:-0.90px;left:99.5px;">MOS</span>
<span id="t196" class="t" style="top:179.8px;font-size:12px;line-height:16px;color:#000;letter-spacing:-0.65px;right:307.4px;">40.0 °C</span>
<span id="t197" class="t" style="top:179.8px;font-size:12px;line-height:16px;color:#000;letter-spacing:-0.65px;right:220.7px;">31.0 °C</span>
<span id="t198" class="t" style="top:179.8px;font-size:12px;line-height:16px;color:#000;letter-spacing:-0.65px;right:133.7px;">40.0 °C</span>
<span id="t199" class="t" style="top:197.8px;font-size:12px;line-height:16px;color:#000;letter-spacing:-0.90px;left:99.5px;">PCH</span>
<span id="t200" class="t" style="top:197.8px;font-size:12px;line-height:16px;color:#000;letter-spacing:-0.65px;right:307.4px;">38.0 °C</span>
<span id="t201" class="t" style="top:197.8px;font-size:12px;line-height:16px;color:#000;letter-spacing:-0.65px;right:220.7px;">36.0 °C</span>
<span id="t202" class="t" style="top:197.8px;font-size:12px;line-height:16px;color:#000;letter-spacing:-0.65px;right:133.7px;">38.0 °C</span>
<div class="b" style="left:97.0px;top:215.0px;width:518px;height:18px;background:#f0f0f0;"></div>
<span id="t203" class="t" style="top:215.8px;font-size:12px;line-height:16px;color:#000;letter-spacing:-0.59px;left:99.5px;">CPU Socket</span>
<span id="t204" class="t" style="top:215.8px;font-size:12px;line-height:16px;color:#000;letter-spacing:-0.65px;right:307.4px;">43.0 °C</span>
<span id="t205" class="t" style="top:215.8px;font-size:12px;line-height:16px;color:#000;letter-spacing:-0.65px;right:220.7px;">32.0 °C</span>
<span id="t206" class="t" style="top:215.8px;font-size:12px;line-height:16px;color:#000;letter-spacing:-0.65px;right:133.7px;">43.0 °C</span>
<span id="t207" class="t" style="top:233.8px;font-size:12px;line-height:16px;color:#000;letter-spacing:-0.90px;left:99.5px;">PCH</span>
<span id="t208" class="t" style="top:233.8px;font-size:12px;line-height:16px;color:#000;letter-spacing:-0.65px;right:307.4px;">38.0 °C</span>
<span id="t209" class="t" style="top:233.8px;font-size:12px;line-height:16px;color:#000;letter-spacing:-0.65px;right:220.7px;">36.0 °C</span>
<span id="t210" class="t" style="top:233.8px;font-size:12px;line-height:16px;color:#000;letter-spacing:-0.65px;right:133.7px;">38.0 °C</span>
<svg class="b" style="left:59.0px;top:252.0px" width="16" height="16" viewBox="0 0 16 16"><defs><linearGradient id="fng" x1="0" y1="0" x2="1" y2="1"><stop offset="0" stop-color="#4a4a4a"/><stop offset=".5" stop-color="#b5b5b5"/><stop offset="1" stop-color="#4a4a4a"/></linearGradient></defs><rect width="16" height="16" fill="url(#fng)"/><path d="M2,3L7,7M14,13L9,9M13,2L9,7M3,14L7,9" stroke="#e6e6e6" stroke-width="1.5"/><circle cx="8" cy="8" r="2.6" fill="#111"/></svg>
<span id="t211" class="t" style="top:251.8px;font-size:12px;line-height:16px;color:#000;letter-spacing:-0.90px;left:80.0px;">Fans</span>
<div class="b" style="left:97.0px;top:269.0px;width:518px;height:18px;background:#f0f0f0;"></div>
<span id="t212" class="t" style="top:269.8px;font-size:12px;line-height:16px;color:#000;letter-spacing:-0.90px;left:99.5px;">CPU</span>
<span id="t213" class="t" style="top:269.8px;font-size:12px;line-height:16px;color:#000;letter-spacing:-0.54px;right:307.3px;">2131 RPM</span>
<span id="t214" class="t" style="top:269.8px;font-size:12px;line-height:16px;color:#000;letter-spacing:-0.60px;right:220.7px;">397 RPM</span>
<span id="t215" class="t" style="top:269.8px;font-size:12px;line-height:16px;color:#000;letter-spacing:-0.54px;right:133.6px;">2135 RPM</span>
<span id="t216" class="t" style="top:287.8px;font-size:12px;line-height:16px;color:#000;letter-spacing:-0.90px;left:99.5px;">PUMP</span>
<span id="t217" class="t" style="top:287.8px;font-size:12px;line-height:16px;color:#000;letter-spacing:-0.54px;right:307.3px;">1804 RPM</span>
<span id="t218" class="t" style="top:287.8px;font-size:12px;line-height:16px;color:#000;letter-spacing:-0.60px;right:220.7px;">753 RPM</span>
<span id="t219" class="t" style="top:287.8px;font-size:12px;line-height:16px;color:#000;letter-spacing:-0.54px;right:133.6px;">1809 RPM</span>
<div class="b" style="left:97.0px;top:305.0px;width:518px;height:18px;background:#f0f0f0;"></div>
<span id="t220" class="t" style="top:305.8px;font-size:12px;line-height:16px;color:#000;letter-spacing:-0.90px;left:99.5px;">SYS2</span>
<span id="t221" class="t" style="top:305.8px;font-size:12px;line-height:16px;color:#000;letter-spacing:-0.54px;right:307.3px;">1957 RPM</span>
<span id="t222" class="t" style="top:305.8px;font-size:12px;line-height:16px;color:#000;letter-spacing:-0.60px;right:220.7px;">840 RPM</span>
<span id="t223" class="t" style="top:305.8px;font-size:12px;line-height:16px;color:#000;letter-spacing:-0.54px;right:133.6px;">1990 RPM</span>
<svg class="b" style="left:59.0px;top:324.0px" width="16" height="16" viewBox="0 0 16 16"><rect x="0.5" y="2.5" width="15" height="11.5" fill="#101410"/><path d="M1.5,9.5L3.5,7L5,9L6.5,6.5L8,9.5L9.5,5L11,10L12.5,7.5L14.5,10.5" fill="none" stroke="#22c04a" stroke-width="1.2"/></svg>
<span id="t224" class="t" style="top:323.8px;font-size:12px;line-height:16px;color:#000;letter-spacing:0.03px;left:80.0px;">Utilization</span>
<div class="b" style="left:59.0px;top:342.0px;width:556px;height:16px;background:#d5e5f3;"></div>
<svg class="b" style="left:40.0px;top:342.0px" width="16" height="16" viewBox="0 0 16 16"><rect x="1" y="1" width="14" height="14" fill="#2c6a2c"/><rect x="3" y="3" width="10" height="10" fill="none" stroke="#e6d22a" stroke-width="2.6" stroke-dasharray="1.1 0.7"/><rect x="5.2" y="5.2" width="5.6" height="5.6" fill="#f0a818"/></svg>
<span id="t225" class="t" style="top:341.8px;font-size:12px;line-height:16px;color:#000;letter-spacing:-0.26px;left:61.0px;">Intel Core i5 12600KF</span>
<svg class="b" style="left:59.0px;top:360.0px" width="16" height="16" viewBox="0 0 16 16"><path d="M0.3,10.2L6.8,3.8L9,6.6L15.6,4.4L8.6,11.6L6.5,8.6z" fill="#f2c21c" stroke="#8a6a10" stroke-width="0.7" stroke-linejoin="round"/></svg>
<span id="t226" class="t" style="top:359.8px;font-size:12px;line-height:16px;color:#000;letter-spacing:-0.15px;left:80.0px;">Voltages</span>
<svg class="b" style="left:59.0px;top:378.0px" width="16" height="16" viewBox="0 0 16 16"><path d="M4.3,11.2L13.6,1.6" stroke="#c9c9c9" stroke-width="2.6" stroke-linecap="round"/><path d="M4.3,11.2L10,5.3" stroke="#ee1c25" stroke-width="1.6" stroke-linecap="round"/><circle cx="3.8" cy="11.9" r="3.1" fill="#ee1c25"/><circle cx="3" cy="11.2" r="0.9" fill="#ffb0b0"/></svg>
<span id="t227" class="t" style="top:377.8px;font-size:12px;line-height:16px;color:#000;letter-spacing:-0.13px;left:80.0px;">Temperatures</span>
<div class="b" style="left:97.0px;top:395.0px;width:518px;height:18px;background:#f0f0f0;"></div>
<span id="t228" class="t" style="top:395.8px;font-size:12px;line-height:16px;color:#000;letter-spacing:-0.64px;left:99.5px;">Package</span>
<span id="t229" class="t" style="top:395.8px;font-size:12px;line-height:16px;color:#000;letter-spacing:-0.65px;right:307.4px;">79.0 °C</span>
<span id="t230" class="t" style="top:395.8px;font-size:12px;line-height:16px;color:#000;letter-spacing:-0.65px;right:220.7px;">35.0 °C</span>
<span id="t231" class="t" style="top:395.8px;font-size:12px;line-height:16px;color:#000;letter-spacing:-0.65px;right:133.7px;">82.0 °C</span>
<span id="t232" class="t" style="top:413.8px;font-size:12px;line-height:16px;color:#000;letter-spacing:-0.90px;left:99.5px;">VR</span>
<span id="t233" class="t" style="top:413.8px;font-size:12px;line-height:16px;color:#000;letter-spacing:-0.65px;right:307.4px;">43.0 °C</span>
<span id="t234" class="t" style="top:413.8px;font-size:12px;line-height:16px;color:#000;letter-spacing:-0.65px;right:220.7px;">33.0 °C</span>
<span id="t235" class="t" style="top:413.8px;font-size:12px;line-height:16px;color:#000;letter-spacing:-0.65px;right:133.7px;">43.0 °C</span>
<div class="b" style="left:97.0px;top:431.0px;width:518px;height:18px;background:#f0f0f0;"></div>
<span id="t236" class="t" style="top:431.8px;font-size:12px;line-height:16px;color:#000;letter-spacing:-0.37px;left:99.5px;">P-Cores (Max)</span>
<span id="t237" class="t" style="top:431.8px;font-size:12px;line-height:16px;color:#000;letter-spacing:-0.65px;right:307.4px;">78.0 °C</span>
<span id="t238" class="t" style="top:431.8px;font-size:12px;line-height:16px;color:#000;letter-spacing:-0.65px;right:220.7px;">33.0 °C</span>
<span id="t239" class="t" style="top:431.8px;font-size:12px;line-height:16px;color:#000;letter-spacing:-0.65px;right:133.7px;">82.0 °C</span>
<span id="t240" class="t" style="top:449.8px;font-size:12px;line-height:16px;color:#000;letter-spacing:-0.43px;left:99.5px;">E-Cores (Max)</span>
<span id="t241" class="t" style="top:449.8px;font-size:12px;line-height:16px;color:#000;letter-spacing:-0.65px;right:307.4px;">66.0 °C</span>
<span id="t242" class="t" style="top:449.8px;font-size:12px;line-height:16px;color:#000;letter-spacing:-0.65px;right:220.7px;">31.0 °C</span>
<span id="t243" class="t" style="top:449.8px;font-size:12px;line-height:16px;color:#000;letter-spacing:-0.65px;right:133.7px;">69.0 °C</span>
<svg class="b" style="left:59.0px;top:468.0px" width="16" height="16" viewBox="0 0 16 16"><path d="M8.6,0.8C10,3 12.8,5 12.8,9.4C12.8,12.6 10.6,15 7.8,15C5,15 2.9,12.8 2.9,10C2.9,7.6 4.4,6.4 5.2,4.8C5.8,6 6.2,6.6 6.8,7C7.6,5 8.4,3.2 8.6,0.8z" fill="#fff" stroke="#f07a18" stroke-width="1.3" stroke-linejoin="round"/><circle cx="7.9" cy="11.3" r="1.5" fill="#f0601a"/></svg>
<span id="t244" class="t" style="top:467.8px;font-size:12px;line-height:16px;color:#000;letter-spacing:-0.59px;left:80.0px;">Powers</span>
<div class="b" style="left:97.0px;top:485.0px;width:518px;height:18px;background:#f0f0f0;"></div>
<span id="t245" class="t" style="top:485.8px;font-size:12px;line-height:16px;color:#000;letter-spacing:-0.64px;left:99.5px;">Package</span>
<span id="t246" class="t" style="top:485.8px;font-size:12px;line-height:16px;color:#000;letter-spacing:-0.42px;right:307.2px;">143.64 W</span>
<span id="t247" class="t" style="top:485.8px;font-size:12px;line-height:16px;color:#000;letter-spacing:-0.50px;right:220.6px;">1.49 W</span>
<span id="t248" class="t" style="top:485.8px;font-size:12px;line-height:16px;color:#000;letter-spacing:-0.42px;right:133.5px;">160.19 W</span>
<span id="t249" class="t" style="top:503.8px;font-size:12px;line-height:16px;color:#000;letter-spacing:-0.40px;left:99.5px;">IA Cores</span>
<span id="t250" class="t" style="top:503.8px;font-size:12px;line-height:16px;color:#000;letter-spacing:-0.42px;right:307.2px;">142.20 W</span>
<span id="t251" class="t" style="top:503.8px;font-size:12px;line-height:16px;color:#000;letter-spacing:-0.50px;right:220.6px;">1.96 W</span>
<span id="t252" class="t" style="top:503.8px;font-size:12px;line-height:16px;color:#000;letter-spacing:-0.42px;right:133.5px;">157.25 W</span>
<div class="b" style="left:97.0px;top:521.0px;width:518px;height:18px;background:#f0f0f0;"></div>
<span id="t253" class="t" style="top:521.8px;font-size:12px;line-height:16px;color:#000;letter-spacing:-0.51px;left:99.5px;">VR Out</span>
<span id="t254" class="t" style="top:521.8px;font-size:12px;line-height:16px;color:#000;letter-spacing:-0.42px;right:307.2px;">133.00 W</span>
<span id="t255" class="t" style="top:521.8px;font-size:12px;line-height:16px;color:#000;letter-spacing:-0.50px;right:220.6px;">0.00 W</span>
<span id="t256" class="t" style="top:521.8px;font-size:12px;line-height:16px;color:#000;letter-spacing:-0.42px;right:133.5px;">134.00 W</span>
<span id="t257" class="t" style="top:539.8px;font-size:12px;line-height:16px;color:#000;letter-spacing:-0.78px;left:99.5px;">VR In</span>
<span id="t258" class="t" style="top:539.8px;font-size:12px;line-height:16px;color:#000;letter-spacing:-0.42px;right:307.2px;">174.00 W</span>
<span id="t259" class="t" style="top:539.8px;font-size:12px;line-height:16px;color:#000;letter-spacing:-0.50px;right:220.6px;">2.00 W</span>
<span id="t260" class="t" style="top:539.8px;font-size:12px;line-height:16px;color:#000;letter-spacing:-0.42px;right:133.5px;">176.00 W</span>
<div class="b" style="left:97.0px;top:557.0px;width:518px;height:18px;background:#f0f0f0;"></div>
<span id="t261" class="t" style="top:557.8px;font-size:12px;line-height:16px;color:#000;letter-spacing:-0.40px;left:99.5px;">Power Max (PL1)</span>
<span id="t262" class="t" style="top:557.8px;font-size:12px;line-height:16px;color:#000;letter-spacing:-0.39px;right:307.2px;">4095.88 W</span>
<span id="t263" class="t" style="top:557.8px;font-size:12px;line-height:16px;color:#000;letter-spacing:-0.39px;right:220.5px;">4095.88 W</span>
<span id="t264" class="t" style="top:557.8px;font-size:12px;line-height:16px;color:#000;letter-spacing:-0.39px;right:133.5px;">4095.88 W</span>
<span id="t265" class="t" style="top:575.8px;font-size:12px;line-height:16px;color:#000;letter-spacing:-0.29px;left:99.5px;">Short Power Max (PL2)</span>
<span id="t266" class="t" style="top:575.8px;font-size:12px;line-height:16px;color:#000;letter-spacing:-0.39px;right:307.2px;">4095.88 W</span>
<span id="t267" class="t" style="top:575.8px;font-size:12px;line-height:16px;color:#000;letter-spacing:-0.39px;right:220.5px;">4095.88 W</span>
<span id="t268" class="t" style="top:575.8px;font-size:12px;line-height:16px;color:#000;letter-spacing:-0.39px;right:133.5px;">4095.88 W</span>
<svg class="b" style="left:59.0px;top:594.0px" width="16" height="16" viewBox="0 0 16 16"><path d="M0.3,10.2L6.8,3.8L9,6.6L15.6,4.4L8.6,11.6L6.5,8.6z" fill="#a8c4ff" stroke="#3a5ab8" stroke-width="0.8" stroke-linejoin="round"/></svg>
<span id="t269" class="t" style="top:593.8px;font-size:12px;line-height:16px;color:#000;letter-spacing:-0.32px;left:80.0px;">Currents</span>
<div class="b" style="left:97.0px;top:611.0px;width:518px;height:18px;background:#f0f0f0;"></div>
<span id="t270" class="t" style="top:611.8px;font-size:12px;line-height:16px;color:#000;letter-spacing:-0.51px;left:99.5px;">VR Out</span>
<span id="t271" class="t" style="top:611.8px;font-size:12px;line-height:16px;color:#000;letter-spacing:-0.35px;right:307.1px;">121.99 A</span>
<span id="t272" class="t" style="top:611.8px;font-size:12px;line-height:16px;color:#000;letter-spacing:-0.40px;right:220.5px;">0.00 A</span>
<span id="t273" class="t" style="top:611.8px;font-size:12px;line-height:16px;color:#000;letter-spacing:-0.35px;right:133.4px;">123.20 A</span>
<span id="t274" class="t" style="top:629.8px;font-size:12px;line-height:16px;color:#000;letter-spacing:-0.47px;left:99.5px;">IccMax</span>
<span id="t275" class="t" style="top:629.8px;font-size:12px;line-height:16px;color:#000;letter-spacing:-0.22px;right:307.0px;">511.75 A</span>
<span id="t276" class="t" style="top:629.8px;font-size:12px;line-height:16px;color:#000;letter-spacing:-0.22px;right:220.3px;">511.75 A</span>
<span id="t277" class="t" style="top:629.8px;font-size:12px;line-height:16px;color:#000;letter-spacing:-0.22px;right:133.3px;">511.75 A</span>
<svg class="b" style="left:59.0px;top:648.0px" width="16" height="16" viewBox="0 0 16 16"><rect x="0.5" y="2.5" width="15" height="11.5" fill="#101410"/><path d="M1.5,9.5L3.5,7L5,9L6.5,6.5L8,9.5L9.5,5L11,10L12.5,7.5L14.5,10.5" fill="none" stroke="#22c04a" stroke-width="1.2"/></svg>
<span id="t278" class="t" style="top:647.8px;font-size:12px;line-height:16px;color:#000;letter-spacing:0.03px;left:80.0px;">Utilization</span>
<svg class="b" style="left:59.0px;top:666.0px" width="16" height="16" viewBox="0 0 16 16"><path d="M0.8,13H2.3V3.4H4.6V13H6.4V3.4H8.7V13H10.5V3.4H12.8V13H14.3" fill="none" stroke="#2a2aa8" stroke-width="1.1"/></svg>
<span id="t279" class="t" style="top:665.8px;font-size:12px;line-height:16px;color:#000;letter-spacing:-0.61px;left:80.0px;">Clocks</span>
<div class="b" style="left:59.0px;top:684.0px;width:556px;height:16px;background:#d5e5f3;"></div>
<svg class="b" style="left:40.0px;top:684.0px" width="16" height="16" viewBox="0 0 16 16"><rect x="0" y="4.6" width="16" height="6.8" fill="#1f8a4c"/><rect x="1.2" y="9.4" width="6" height="1.2" fill="#e0c040"/><rect x="8.4" y="9.4" width="6.4" height="1.2" fill="#e0c040"/><g fill="#0d3a20"><rect x="2" y="5.8" width="1.6" height="2.4"/><rect x="4.6" y="5.8" width="1.6" height="2.4"/><rect x="7.2" y="5.8" width="1.6" height="2.4"/><rect x="9.8" y="5.8" width="1.6" height="2.4"/><rect x="12.4" y="5.8" width="1.6" height="2.4"/></g></svg>
<span id="t280" class="t" style="top:683.8px;font-size:12px;line-height:16px;color:#000;letter-spacing:-0.19px;left:61.0px;">A-Data Technology AX5U6000C...</span>
<svg class="b" style="left:59.0px;top:702.0px" width="16" height="16" viewBox="0 0 16 16"><path d="M0.3,10.2L6.8,3.8L9,6.6L15.6,4.4L8.6,11.6L6.5,8.6z" fill="#f2c21c" stroke="#8a6a10" stroke-width="0.7" stroke-linejoin="round"/></svg>
<span id="t281" class="t" style="top:701.8px;font-size:12px;line-height:16px;color:#000;letter-spacing:-0.15px;left:80.0px;">Voltages</span>
<svg class="b" style="left:59.0px;top:720.0px" width="16" height="16" viewBox="0 0 16 16"><path d="M4.3,11.2L13.6,1.6" stroke="#c9c9c9" stroke-width="2.6" stroke-linecap="round"/><path d="M4.3,11.2L10,5.3" stroke="#ee1c25" stroke-width="1.6" stroke-linecap="round"/><circle cx="3.8" cy="11.9" r="3.1" fill="#ee1c25"/><circle cx="3" cy="11.2" r="0.9" fill="#ffb0b0"/></svg>
<span id="t282" class="t" style="top:719.8px;font-size:12px;line-height:16px;color:#000;letter-spacing:-0.13px;left:80.0px;">Temperatures</span>
<div class="b" style="left:97.0px;top:737.0px;width:518px;height:18px;background:#f0f0f0;"></div>
<span id="t283" class="t" style="top:737.8px;font-size:12px;line-height:16px;color:#000;letter-spacing:-0.69px;left:99.5px;">Core</span>
<span id="t284" class="t" style="top:737.8px;font-size:12px;line-height:16px;color:#000;letter-spacing:-0.65px;right:307.4px;">34.5 °C</span>
<span id="t285" class="t" style="top:737.8px;font-size:12px;line-height:16px;color:#000;letter-spacing:-0.65px;right:220.7px;">32.8 °C</span>
<span id="t286" class="t" style="top:737.8px;font-size:12px;line-height:16px;color:#000;letter-spacing:-0.65px;right:133.7px;">34.5 °C</span>
<svg class="b" style="left:59.0px;top:756.0px" width="16" height="16" viewBox="0 0 16 16"><path d="M8.6,0.8C10,3 12.8,5 12.8,9.4C12.8,12.6 10.6,15 7.8,15C5,15 2.9,12.8 2.9,10C2.9,7.6 4.4,6.4 5.2,4.8C5.8,6 6.2,6.6 6.8,7C7.6,5 8.4,3.2 8.6,0.8z" fill="#fff" stroke="#f07a18" stroke-width="1.3" stroke-linejoin="round"/><circle cx="7.9" cy="11.3" r="1.5" fill="#f0601a"/></svg>
<span id="t287" class="t" style="top:755.8px;font-size:12px;line-height:16px;color:#000;letter-spacing:-0.59px;left:80.0px;">Powers</span>
<svg class="b" style="left:0;top:0" width="634" height="791"><g stroke="#9a9a9a" stroke-width="1" stroke-dasharray="1 1" fill="none"><path d="M16,81.5H22"/><path d="M34,99.5H40"/><path d="M54,117.5H60"/><path d="M54,135.5H60"/><path d="M68,153.5H78"/><path d="M68,171.5H78"/><path d="M68,189.5H78"/><path d="M68,207.5H78"/><path d="M68,225.5H78"/><path d="M68,243.5H78"/><path d="M54,261.5H60"/><path d="M68,279.5H78"/><path d="M68,297.5H78"/><path d="M68,315.5H78"/><path d="M54,333.5H60"/><path d="M34,351.5H40"/><path d="M54,369.5H60"/><path d="M54,387.5H60"/><path d="M68,405.5H78"/><path d="M68,423.5H78"/><path d="M68,441.5H78"/><path d="M68,459.5H78"/><path d="M54,477.5H60"/><path d="M68,495.5H78"/><path d="M68,513.5H78"/><path d="M68,531.5H78"/><path d="M68,549.5H78"/><path d="M68,567.5H78"/><path d="M68,585.5H78"/><path d="M54,603.5H60"/><path d="M68,621.5H78"/><path d="M68,639.5H78"/><path d="M54,657.5H60"/><path d="M54,675.5H60"/><path d="M34,693.5H40"/><path d="M54,711.5H60"/><path d="M54,729.5H60"/><path d="M68,747.5H78"/><path d="M54,765.5H60"/><path d="M29.5,89V771"/><path d="M48.5,107V333"/><path d="M67.5,143V243"/><path d="M67.5,269V315"/><path d="M48.5,359V675"/><path d="M67.5,395V459"/><path d="M67.5,485V585"/><path d="M67.5,611V639"/><path d="M48.5,701V771"/><path d="M67.5,737V747"/><path d="M67.5,773V771"/></g><rect x="6.5" y="77.5" width="8" height="8" fill="#fff" stroke="#828282"/><path d="M8.0,81.5h5" stroke="#000"/><rect x="25.5" y="95.5" width="8" height="8" fill="#fff" stroke="#828282"/><path d="M27.0,99.5h5" stroke="#000"/><rect x="44.5" y="113.5" width="8" height="8" fill="#fff" stroke="#828282"/><path d="M46.0,117.5h5" stroke="#000"/><path d="M48.5,115.0v5" stroke="#000"/><rect x="44.5" y="131.5" width="8" height="8" fill="#fff" stroke="#828282"/><path d="M46.0,135.5h5" stroke="#000"/><rect x="44.5" y="257.5" width="8" height="8" fill="#fff" stroke="#828282"/><path d="M46.0,261.5h5" stroke="#000"/><rect x="44.5" y="329.5" width="8" height="8" fill="#fff" stroke="#828282"/><path d="M46.0,333.5h5" stroke="#000"/><path d="M48.5,331.0v5" stroke="#000"/><rect x="25.5" y="347.5" width="8" height="8" fill="#fff" stroke="#828282"/><path d="M27.0,351.5h5" stroke="#000"/><rect x="44.5" y="365.5" width="8" height="8" fill="#fff" stroke="#828282"/><path d="M46.0,369.5h5" stroke="#000"/><path d="M48.5,367.0v5" stroke="#000"/><rect x="44.5" y="383.5" width="8" height="8" fill="#fff" stroke="#828282"/><path d="M46.0,387.5h5" stroke="#000"/><rect x="63.5" y="437.5" width="8" height="8" fill="#fff" stroke="#828282"/><path d="M65.0,441.5h5" stroke="#000"/><path d="M67.5,439.0v5" stroke="#000"/><rect x="63.5" y="455.5" width="8" height="8" fill="#fff" stroke="#828282"/><path d="M65.0,459.5h5" stroke="#000"/><path d="M67.5,457.0v5" stroke="#000"/><rect x="44.5" y="473.5" width="8" height="8" fill="#fff" stroke="#828282"/><path d="M46.0,477.5h5" stroke="#000"/><rect x="44.5" y="599.5" width="8" height="8" fill="#fff" stroke="#828282"/><path d="M46.0,603.5h5" stroke="#000"/><rect x="44.5" y="653.5" width="8" height="8" fill="#fff" stroke="#828282"/><path d="M46.0,657.5h5" stroke="#000"/><path d="M48.5,655.0v5" stroke="#000"/><rect x="44.5" y="671.5" width="8" height="8" fill="#fff" stroke="#828282"/><path d="M46.0,675.5h5" stroke="#000"/><path d="M48.5,673.0v5" stroke="#000"/><rect x="25.5" y="689.5" width="8" height="8" fill="#fff" stroke="#828282"/><path d="M27.0,693.5h5" stroke="#000"/><rect x="44.5" y="707.5" width="8" height="8" fill="#fff" stroke="#828282"/><path d="M46.0,711.5h5" stroke="#000"/><path d="M48.5,709.0v5" stroke="#000"/><rect x="44.5" y="725.5" width="8" height="8" fill="#fff" stroke="#828282"/><path d="M46.0,729.5h5" stroke="#000"/><rect x="44.5" y="761.5" width="8" height="8" fill="#fff" stroke="#828282"/><path d="M46.0,765.5h5" stroke="#000"/></svg>
<div class="b" style="left:0;top:771px;width:634px;height:20px;background:#f0f0f0;border-top:1px solid #fff;box-sizing:border-box;"></div>
<span class="t" style="left:2.5px;top:774.7px;font-size:12px;line-height:16px;color:#000;letter-spacing:-0.7px">Ready</span>
<div class="b" style="left:515px;top:774px;width:28px;height:18px;background:#f0f0f0;border-left:1px solid #a0a0a0;border-top:1px solid #a0a0a0;border-right:1px solid #fff;box-sizing:border-box;"></div>
<div class="b" style="left:546px;top:774px;width:33px;height:18px;background:#f0f0f0;border-left:1px solid #a0a0a0;border-top:1px solid #a0a0a0;border-right:1px solid #fff;box-sizing:border-box;"></div>
<div class="b" style="left:582px;top:774px;width:32px;height:18px;background:#f0f0f0;border-left:1px solid #a0a0a0;border-top:1px solid #a0a0a0;border-right:1px solid #fff;box-sizing:border-box;"></div>
<svg class="b" style="left:620px;top:777px" width="14" height="14"><path d="M2,14L14,2M6,14L14,6M10,14L14,10" stroke="#a0a0a0" stroke-width="1" fill="none"/></svg>
</div>
</body></html>
